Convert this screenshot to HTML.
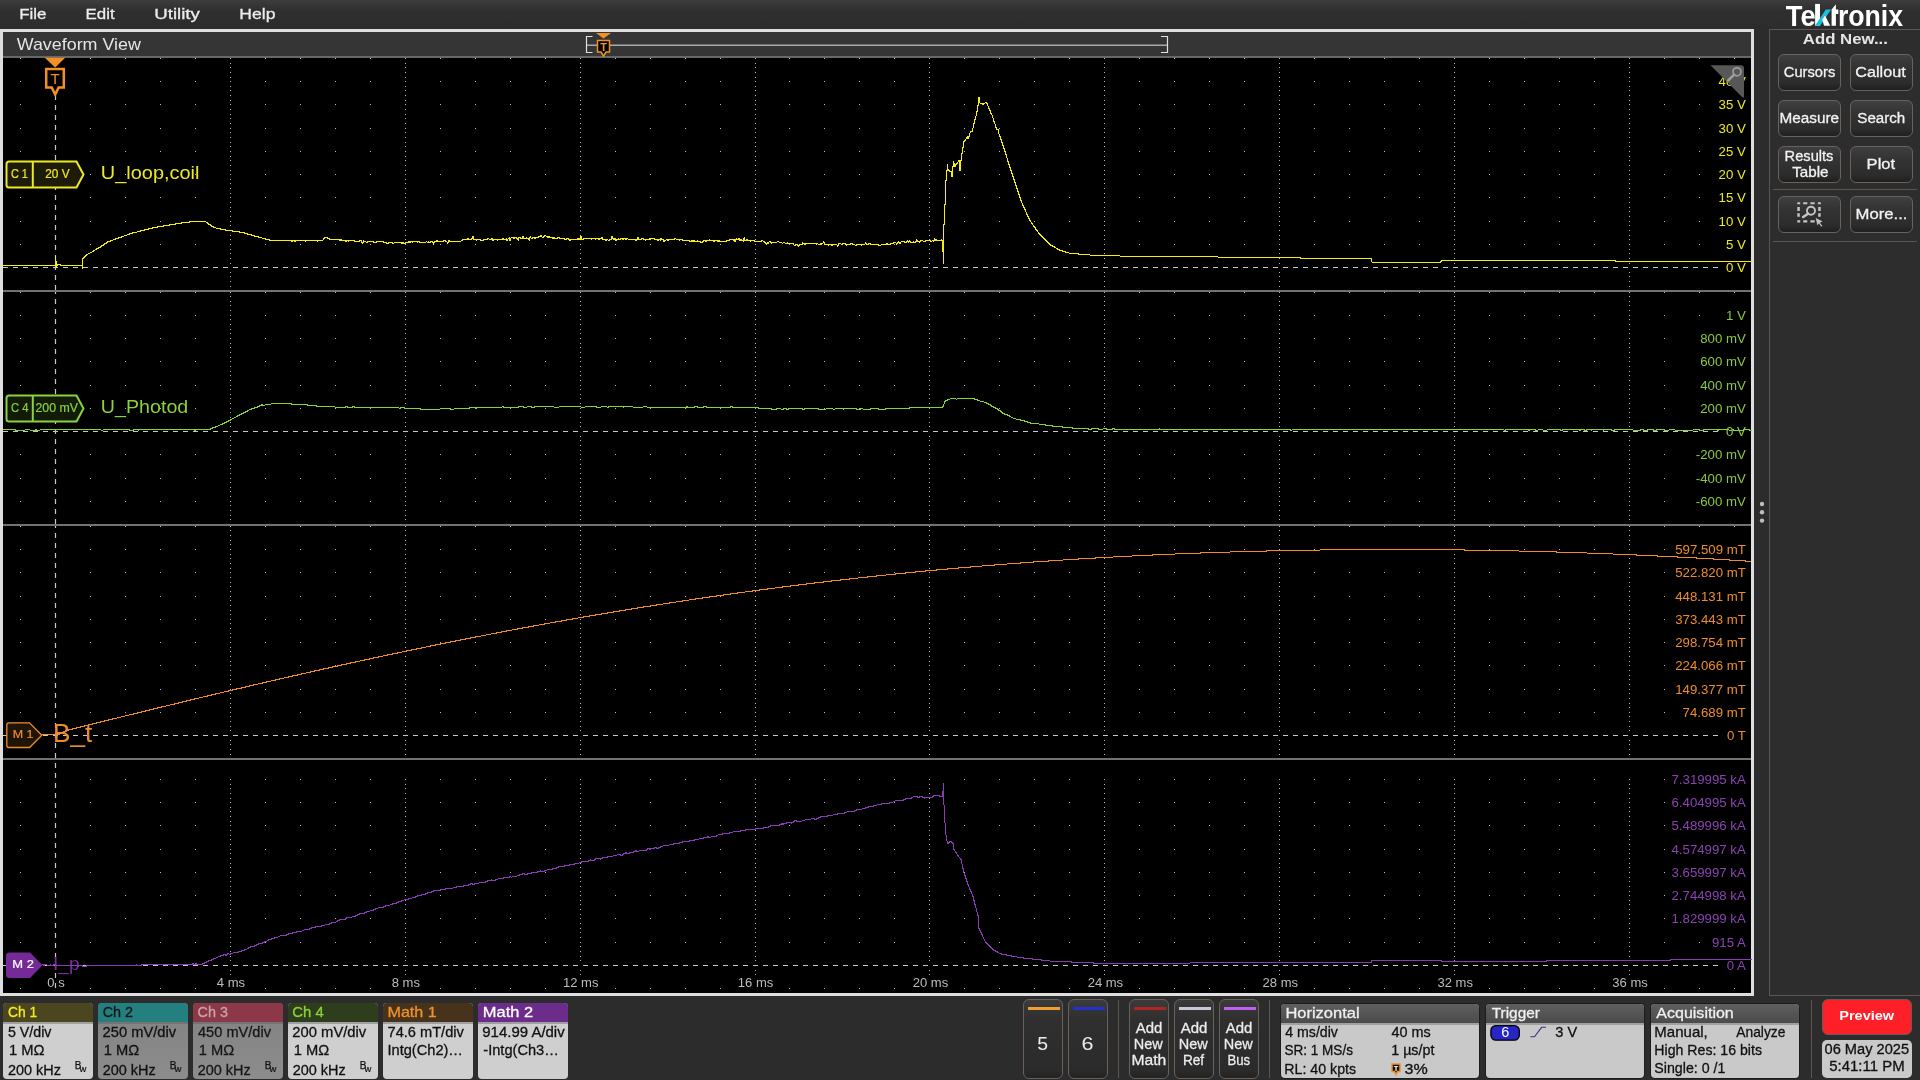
<!DOCTYPE html>
<html><head><meta charset="utf-8">
<style>
*{margin:0;padding:0;box-sizing:border-box}
html,body{width:1920px;height:1080px;overflow:hidden;background:#2c2c2c;font-family:"Liberation Sans", sans-serif;}
.a{position:absolute}
svg{position:absolute;left:0;top:0;will-change:transform}
svg text{font-family:"Liberation Sans", sans-serif}
.menu{position:absolute;left:0;top:0;width:1920px;height:29px;background:linear-gradient(#3d3d3d 0%,#2f2f2f 35%,#2c2c2c 100%)}
.frame{position:absolute;left:0;top:29px;width:1754px;height:967px;border:3px solid #dedede;background:#000}
.title{position:absolute;left:3px;top:32px;width:1748px;height:24px;background:#353535}
.rp{position:absolute;left:1769px;top:29px;width:151px;height:967px;border:1px solid #5a5755;border-right:none;background:#2d2d2d}
.btn{position:absolute;width:63px;height:37px;border:1px solid #6b615b;border-radius:6px;background:linear-gradient(#3f3f41 0%,#333334 35%,#2c2c2c 80%,#1f1f1f 100%)}
.sep{position:absolute;height:1px;background:#5d554f}
.badge{position:absolute;top:1003px;width:90px;height:76px;border-radius:4px;overflow:hidden;background:#cfcfcf}
.bh{height:21px;border-bottom:2px solid #a0a0a0}
.sbtn{position:absolute;top:999px;width:40px;height:80px;border:1px solid #6b615b;border-radius:6px;background:linear-gradient(#3b3b3c 0%,#2f2f2f 25%,#2b2b2b 90%,#222 100%)}
.strip{position:absolute;left:3.5px;top:7px;width:32px;height:2.5px}
.box{position:absolute;top:1004px;height:74px;border-radius:4px;overflow:hidden;background:#c9c9c9;box-shadow:0 0 0 1px #1c1c1c}
.boxh{height:21px;background:linear-gradient(#5f5f5f,#4b4b4b);border-bottom:2px solid #a0a0a0}
</style></head><body>
<div class="menu"></div>
<div class="frame"></div>
<div class="title"></div>
<svg width="1920" height="1080">
<rect x="3" y="56" width="1748" height="2" fill="#686868"/>
<path d="M592.5 36.5 H586.5 V52.5 H592.5" fill="none" stroke="#e0e0e0" stroke-width="1.2"/>
<path d="M1161 36.5 H1167.5 V52.5 H1161" fill="none" stroke="#e0e0e0" stroke-width="1.2"/>
<rect x="587" y="44.5" width="580" height="1.5" fill="#a8a8a8"/>
<path d="M596 33 L611 33 L603.5 38.5 Z" fill="#f0902a"/>
<path d="M597.5 40.5 L609.5 40.5 L609.5 52 L606 52 L603.5 56 L601 52 L597.5 52 Z" fill="#000" stroke="#f0902a" stroke-width="1.5"/>
<text x="603.5" y="50.5" font-size="11" font-weight="bold" fill="#f0902a" text-anchor="middle">T</text>
<path d="M20 58h1v1h-1zM90 58h1v1h-1zM125 58h1v1h-1zM160 58h1v1h-1zM195 58h1v1h-1zM230 58h1v1h-1zM265 58h1v1h-1zM300 58h1v1h-1zM335 58h1v1h-1zM370 58h1v1h-1zM405 58h1v1h-1zM440 58h1v1h-1zM475 58h1v1h-1zM510 58h1v1h-1zM545 58h1v1h-1zM580 58h1v1h-1zM615 58h1v1h-1zM650 58h1v1h-1zM685 58h1v1h-1zM720 58h1v1h-1zM755 58h1v1h-1zM789 58h1v1h-1zM824 58h1v1h-1zM859 58h1v1h-1zM894 58h1v1h-1zM929 58h1v1h-1zM964 58h1v1h-1zM999 58h1v1h-1zM1034 58h1v1h-1zM1069 58h1v1h-1zM1104 58h1v1h-1zM1139 58h1v1h-1zM1174 58h1v1h-1zM1209 58h1v1h-1zM1244 58h1v1h-1zM1279 58h1v1h-1zM1314 58h1v1h-1zM1349 58h1v1h-1zM1384 58h1v1h-1zM1419 58h1v1h-1zM1454 58h1v1h-1zM1489 58h1v1h-1zM1524 58h1v1h-1zM1559 58h1v1h-1zM1594 58h1v1h-1zM1629 58h1v1h-1zM1664 58h1v1h-1zM1699 58h1v1h-1zM1734 58h1v1h-1zM20 81h1v1h-1zM90 81h1v1h-1zM125 81h1v1h-1zM160 81h1v1h-1zM195 81h1v1h-1zM230 81h1v1h-1zM265 81h1v1h-1zM300 81h1v1h-1zM335 81h1v1h-1zM370 81h1v1h-1zM405 81h1v1h-1zM440 81h1v1h-1zM475 81h1v1h-1zM510 81h1v1h-1zM545 81h1v1h-1zM580 81h1v1h-1zM615 81h1v1h-1zM650 81h1v1h-1zM685 81h1v1h-1zM720 81h1v1h-1zM755 81h1v1h-1zM789 81h1v1h-1zM824 81h1v1h-1zM859 81h1v1h-1zM894 81h1v1h-1zM929 81h1v1h-1zM964 81h1v1h-1zM999 81h1v1h-1zM1034 81h1v1h-1zM1069 81h1v1h-1zM1104 81h1v1h-1zM1139 81h1v1h-1zM1174 81h1v1h-1zM1209 81h1v1h-1zM1244 81h1v1h-1zM1279 81h1v1h-1zM1314 81h1v1h-1zM1349 81h1v1h-1zM1384 81h1v1h-1zM1419 81h1v1h-1zM1454 81h1v1h-1zM1489 81h1v1h-1zM1524 81h1v1h-1zM1559 81h1v1h-1zM1594 81h1v1h-1zM1629 81h1v1h-1zM1664 81h1v1h-1zM1699 81h1v1h-1zM1734 81h1v1h-1zM20 104h1v1h-1zM90 104h1v1h-1zM125 104h1v1h-1zM160 104h1v1h-1zM195 104h1v1h-1zM230 104h1v1h-1zM265 104h1v1h-1zM300 104h1v1h-1zM335 104h1v1h-1zM370 104h1v1h-1zM405 104h1v1h-1zM440 104h1v1h-1zM475 104h1v1h-1zM510 104h1v1h-1zM545 104h1v1h-1zM580 104h1v1h-1zM615 104h1v1h-1zM650 104h1v1h-1zM685 104h1v1h-1zM720 104h1v1h-1zM755 104h1v1h-1zM789 104h1v1h-1zM824 104h1v1h-1zM859 104h1v1h-1zM894 104h1v1h-1zM929 104h1v1h-1zM964 104h1v1h-1zM999 104h1v1h-1zM1034 104h1v1h-1zM1069 104h1v1h-1zM1104 104h1v1h-1zM1139 104h1v1h-1zM1174 104h1v1h-1zM1209 104h1v1h-1zM1244 104h1v1h-1zM1279 104h1v1h-1zM1314 104h1v1h-1zM1349 104h1v1h-1zM1384 104h1v1h-1zM1419 104h1v1h-1zM1454 104h1v1h-1zM1489 104h1v1h-1zM1524 104h1v1h-1zM1559 104h1v1h-1zM1594 104h1v1h-1zM1629 104h1v1h-1zM1664 104h1v1h-1zM1699 104h1v1h-1zM1734 104h1v1h-1zM20 128h1v1h-1zM90 128h1v1h-1zM125 128h1v1h-1zM160 128h1v1h-1zM195 128h1v1h-1zM230 128h1v1h-1zM265 128h1v1h-1zM300 128h1v1h-1zM335 128h1v1h-1zM370 128h1v1h-1zM405 128h1v1h-1zM440 128h1v1h-1zM475 128h1v1h-1zM510 128h1v1h-1zM545 128h1v1h-1zM580 128h1v1h-1zM615 128h1v1h-1zM650 128h1v1h-1zM685 128h1v1h-1zM720 128h1v1h-1zM755 128h1v1h-1zM789 128h1v1h-1zM824 128h1v1h-1zM859 128h1v1h-1zM894 128h1v1h-1zM929 128h1v1h-1zM964 128h1v1h-1zM999 128h1v1h-1zM1034 128h1v1h-1zM1069 128h1v1h-1zM1104 128h1v1h-1zM1139 128h1v1h-1zM1174 128h1v1h-1zM1209 128h1v1h-1zM1244 128h1v1h-1zM1279 128h1v1h-1zM1314 128h1v1h-1zM1349 128h1v1h-1zM1384 128h1v1h-1zM1419 128h1v1h-1zM1454 128h1v1h-1zM1489 128h1v1h-1zM1524 128h1v1h-1zM1559 128h1v1h-1zM1594 128h1v1h-1zM1629 128h1v1h-1zM1664 128h1v1h-1zM1699 128h1v1h-1zM1734 128h1v1h-1zM20 151h1v1h-1zM90 151h1v1h-1zM125 151h1v1h-1zM160 151h1v1h-1zM195 151h1v1h-1zM230 151h1v1h-1zM265 151h1v1h-1zM300 151h1v1h-1zM335 151h1v1h-1zM370 151h1v1h-1zM405 151h1v1h-1zM440 151h1v1h-1zM475 151h1v1h-1zM510 151h1v1h-1zM545 151h1v1h-1zM580 151h1v1h-1zM615 151h1v1h-1zM650 151h1v1h-1zM685 151h1v1h-1zM720 151h1v1h-1zM755 151h1v1h-1zM789 151h1v1h-1zM824 151h1v1h-1zM859 151h1v1h-1zM894 151h1v1h-1zM929 151h1v1h-1zM964 151h1v1h-1zM999 151h1v1h-1zM1034 151h1v1h-1zM1069 151h1v1h-1zM1104 151h1v1h-1zM1139 151h1v1h-1zM1174 151h1v1h-1zM1209 151h1v1h-1zM1244 151h1v1h-1zM1279 151h1v1h-1zM1314 151h1v1h-1zM1349 151h1v1h-1zM1384 151h1v1h-1zM1419 151h1v1h-1zM1454 151h1v1h-1zM1489 151h1v1h-1zM1524 151h1v1h-1zM1559 151h1v1h-1zM1594 151h1v1h-1zM1629 151h1v1h-1zM1664 151h1v1h-1zM1699 151h1v1h-1zM1734 151h1v1h-1zM20 174h1v1h-1zM90 174h1v1h-1zM125 174h1v1h-1zM160 174h1v1h-1zM195 174h1v1h-1zM230 174h1v1h-1zM265 174h1v1h-1zM300 174h1v1h-1zM335 174h1v1h-1zM370 174h1v1h-1zM405 174h1v1h-1zM440 174h1v1h-1zM475 174h1v1h-1zM510 174h1v1h-1zM545 174h1v1h-1zM580 174h1v1h-1zM615 174h1v1h-1zM650 174h1v1h-1zM685 174h1v1h-1zM720 174h1v1h-1zM755 174h1v1h-1zM789 174h1v1h-1zM824 174h1v1h-1zM859 174h1v1h-1zM894 174h1v1h-1zM929 174h1v1h-1zM964 174h1v1h-1zM999 174h1v1h-1zM1034 174h1v1h-1zM1069 174h1v1h-1zM1104 174h1v1h-1zM1139 174h1v1h-1zM1174 174h1v1h-1zM1209 174h1v1h-1zM1244 174h1v1h-1zM1279 174h1v1h-1zM1314 174h1v1h-1zM1349 174h1v1h-1zM1384 174h1v1h-1zM1419 174h1v1h-1zM1454 174h1v1h-1zM1489 174h1v1h-1zM1524 174h1v1h-1zM1559 174h1v1h-1zM1594 174h1v1h-1zM1629 174h1v1h-1zM1664 174h1v1h-1zM1699 174h1v1h-1zM1734 174h1v1h-1zM20 197h1v1h-1zM90 197h1v1h-1zM125 197h1v1h-1zM160 197h1v1h-1zM195 197h1v1h-1zM230 197h1v1h-1zM265 197h1v1h-1zM300 197h1v1h-1zM335 197h1v1h-1zM370 197h1v1h-1zM405 197h1v1h-1zM440 197h1v1h-1zM475 197h1v1h-1zM510 197h1v1h-1zM545 197h1v1h-1zM580 197h1v1h-1zM615 197h1v1h-1zM650 197h1v1h-1zM685 197h1v1h-1zM720 197h1v1h-1zM755 197h1v1h-1zM789 197h1v1h-1zM824 197h1v1h-1zM859 197h1v1h-1zM894 197h1v1h-1zM929 197h1v1h-1zM964 197h1v1h-1zM999 197h1v1h-1zM1034 197h1v1h-1zM1069 197h1v1h-1zM1104 197h1v1h-1zM1139 197h1v1h-1zM1174 197h1v1h-1zM1209 197h1v1h-1zM1244 197h1v1h-1zM1279 197h1v1h-1zM1314 197h1v1h-1zM1349 197h1v1h-1zM1384 197h1v1h-1zM1419 197h1v1h-1zM1454 197h1v1h-1zM1489 197h1v1h-1zM1524 197h1v1h-1zM1559 197h1v1h-1zM1594 197h1v1h-1zM1629 197h1v1h-1zM1664 197h1v1h-1zM1699 197h1v1h-1zM1734 197h1v1h-1zM20 221h1v1h-1zM90 221h1v1h-1zM125 221h1v1h-1zM160 221h1v1h-1zM195 221h1v1h-1zM230 221h1v1h-1zM265 221h1v1h-1zM300 221h1v1h-1zM335 221h1v1h-1zM370 221h1v1h-1zM405 221h1v1h-1zM440 221h1v1h-1zM475 221h1v1h-1zM510 221h1v1h-1zM545 221h1v1h-1zM580 221h1v1h-1zM615 221h1v1h-1zM650 221h1v1h-1zM685 221h1v1h-1zM720 221h1v1h-1zM755 221h1v1h-1zM789 221h1v1h-1zM824 221h1v1h-1zM859 221h1v1h-1zM894 221h1v1h-1zM929 221h1v1h-1zM964 221h1v1h-1zM999 221h1v1h-1zM1034 221h1v1h-1zM1069 221h1v1h-1zM1104 221h1v1h-1zM1139 221h1v1h-1zM1174 221h1v1h-1zM1209 221h1v1h-1zM1244 221h1v1h-1zM1279 221h1v1h-1zM1314 221h1v1h-1zM1349 221h1v1h-1zM1384 221h1v1h-1zM1419 221h1v1h-1zM1454 221h1v1h-1zM1489 221h1v1h-1zM1524 221h1v1h-1zM1559 221h1v1h-1zM1594 221h1v1h-1zM1629 221h1v1h-1zM1664 221h1v1h-1zM1699 221h1v1h-1zM1734 221h1v1h-1zM20 244h1v1h-1zM90 244h1v1h-1zM125 244h1v1h-1zM160 244h1v1h-1zM195 244h1v1h-1zM230 244h1v1h-1zM265 244h1v1h-1zM300 244h1v1h-1zM335 244h1v1h-1zM370 244h1v1h-1zM405 244h1v1h-1zM440 244h1v1h-1zM475 244h1v1h-1zM510 244h1v1h-1zM545 244h1v1h-1zM580 244h1v1h-1zM615 244h1v1h-1zM650 244h1v1h-1zM685 244h1v1h-1zM720 244h1v1h-1zM755 244h1v1h-1zM789 244h1v1h-1zM824 244h1v1h-1zM859 244h1v1h-1zM894 244h1v1h-1zM929 244h1v1h-1zM964 244h1v1h-1zM999 244h1v1h-1zM1034 244h1v1h-1zM1069 244h1v1h-1zM1104 244h1v1h-1zM1139 244h1v1h-1zM1174 244h1v1h-1zM1209 244h1v1h-1zM1244 244h1v1h-1zM1279 244h1v1h-1zM1314 244h1v1h-1zM1349 244h1v1h-1zM1384 244h1v1h-1zM1419 244h1v1h-1zM1454 244h1v1h-1zM1489 244h1v1h-1zM1524 244h1v1h-1zM1559 244h1v1h-1zM1594 244h1v1h-1zM1629 244h1v1h-1zM1664 244h1v1h-1zM1699 244h1v1h-1zM1734 244h1v1h-1zM230 63h1v1h-1zM405 63h1v1h-1zM580 63h1v1h-1zM755 63h1v1h-1zM929 63h1v1h-1zM1104 63h1v1h-1zM1279 63h1v1h-1zM1454 63h1v1h-1zM1629 63h1v1h-1zM230 67h1v1h-1zM405 67h1v1h-1zM580 67h1v1h-1zM755 67h1v1h-1zM929 67h1v1h-1zM1104 67h1v1h-1zM1279 67h1v1h-1zM1454 67h1v1h-1zM1629 67h1v1h-1zM230 72h1v1h-1zM405 72h1v1h-1zM580 72h1v1h-1zM755 72h1v1h-1zM929 72h1v1h-1zM1104 72h1v1h-1zM1279 72h1v1h-1zM1454 72h1v1h-1zM1629 72h1v1h-1zM230 77h1v1h-1zM405 77h1v1h-1zM580 77h1v1h-1zM755 77h1v1h-1zM929 77h1v1h-1zM1104 77h1v1h-1zM1279 77h1v1h-1zM1454 77h1v1h-1zM1629 77h1v1h-1zM230 86h1v1h-1zM405 86h1v1h-1zM580 86h1v1h-1zM755 86h1v1h-1zM929 86h1v1h-1zM1104 86h1v1h-1zM1279 86h1v1h-1zM1454 86h1v1h-1zM1629 86h1v1h-1zM230 90h1v1h-1zM405 90h1v1h-1zM580 90h1v1h-1zM755 90h1v1h-1zM929 90h1v1h-1zM1104 90h1v1h-1zM1279 90h1v1h-1zM1454 90h1v1h-1zM1629 90h1v1h-1zM230 95h1v1h-1zM405 95h1v1h-1zM580 95h1v1h-1zM755 95h1v1h-1zM929 95h1v1h-1zM1104 95h1v1h-1zM1279 95h1v1h-1zM1454 95h1v1h-1zM1629 95h1v1h-1zM230 100h1v1h-1zM405 100h1v1h-1zM580 100h1v1h-1zM755 100h1v1h-1zM929 100h1v1h-1zM1104 100h1v1h-1zM1279 100h1v1h-1zM1454 100h1v1h-1zM1629 100h1v1h-1zM230 109h1v1h-1zM405 109h1v1h-1zM580 109h1v1h-1zM755 109h1v1h-1zM929 109h1v1h-1zM1104 109h1v1h-1zM1279 109h1v1h-1zM1454 109h1v1h-1zM1629 109h1v1h-1zM230 114h1v1h-1zM405 114h1v1h-1zM580 114h1v1h-1zM755 114h1v1h-1zM929 114h1v1h-1zM1104 114h1v1h-1zM1279 114h1v1h-1zM1454 114h1v1h-1zM1629 114h1v1h-1zM230 118h1v1h-1zM405 118h1v1h-1zM580 118h1v1h-1zM755 118h1v1h-1zM929 118h1v1h-1zM1104 118h1v1h-1zM1279 118h1v1h-1zM1454 118h1v1h-1zM1629 118h1v1h-1zM230 123h1v1h-1zM405 123h1v1h-1zM580 123h1v1h-1zM755 123h1v1h-1zM929 123h1v1h-1zM1104 123h1v1h-1zM1279 123h1v1h-1zM1454 123h1v1h-1zM1629 123h1v1h-1zM230 132h1v1h-1zM405 132h1v1h-1zM580 132h1v1h-1zM755 132h1v1h-1zM929 132h1v1h-1zM1104 132h1v1h-1zM1279 132h1v1h-1zM1454 132h1v1h-1zM1629 132h1v1h-1zM230 137h1v1h-1zM405 137h1v1h-1zM580 137h1v1h-1zM755 137h1v1h-1zM929 137h1v1h-1zM1104 137h1v1h-1zM1279 137h1v1h-1zM1454 137h1v1h-1zM1629 137h1v1h-1zM230 142h1v1h-1zM405 142h1v1h-1zM580 142h1v1h-1zM755 142h1v1h-1zM929 142h1v1h-1zM1104 142h1v1h-1zM1279 142h1v1h-1zM1454 142h1v1h-1zM1629 142h1v1h-1zM230 146h1v1h-1zM405 146h1v1h-1zM580 146h1v1h-1zM755 146h1v1h-1zM929 146h1v1h-1zM1104 146h1v1h-1zM1279 146h1v1h-1zM1454 146h1v1h-1zM1629 146h1v1h-1zM230 156h1v1h-1zM405 156h1v1h-1zM580 156h1v1h-1zM755 156h1v1h-1zM929 156h1v1h-1zM1104 156h1v1h-1zM1279 156h1v1h-1zM1454 156h1v1h-1zM1629 156h1v1h-1zM230 160h1v1h-1zM405 160h1v1h-1zM580 160h1v1h-1zM755 160h1v1h-1zM929 160h1v1h-1zM1104 160h1v1h-1zM1279 160h1v1h-1zM1454 160h1v1h-1zM1629 160h1v1h-1zM230 165h1v1h-1zM405 165h1v1h-1zM580 165h1v1h-1zM755 165h1v1h-1zM929 165h1v1h-1zM1104 165h1v1h-1zM1279 165h1v1h-1zM1454 165h1v1h-1zM1629 165h1v1h-1zM230 170h1v1h-1zM405 170h1v1h-1zM580 170h1v1h-1zM755 170h1v1h-1zM929 170h1v1h-1zM1104 170h1v1h-1zM1279 170h1v1h-1zM1454 170h1v1h-1zM1629 170h1v1h-1zM230 179h1v1h-1zM405 179h1v1h-1zM580 179h1v1h-1zM755 179h1v1h-1zM929 179h1v1h-1zM1104 179h1v1h-1zM1279 179h1v1h-1zM1454 179h1v1h-1zM1629 179h1v1h-1zM230 183h1v1h-1zM405 183h1v1h-1zM580 183h1v1h-1zM755 183h1v1h-1zM929 183h1v1h-1zM1104 183h1v1h-1zM1279 183h1v1h-1zM1454 183h1v1h-1zM1629 183h1v1h-1zM230 188h1v1h-1zM405 188h1v1h-1zM580 188h1v1h-1zM755 188h1v1h-1zM929 188h1v1h-1zM1104 188h1v1h-1zM1279 188h1v1h-1zM1454 188h1v1h-1zM1629 188h1v1h-1zM230 193h1v1h-1zM405 193h1v1h-1zM580 193h1v1h-1zM755 193h1v1h-1zM929 193h1v1h-1zM1104 193h1v1h-1zM1279 193h1v1h-1zM1454 193h1v1h-1zM1629 193h1v1h-1zM230 202h1v1h-1zM405 202h1v1h-1zM580 202h1v1h-1zM755 202h1v1h-1zM929 202h1v1h-1zM1104 202h1v1h-1zM1279 202h1v1h-1zM1454 202h1v1h-1zM1629 202h1v1h-1zM230 207h1v1h-1zM405 207h1v1h-1zM580 207h1v1h-1zM755 207h1v1h-1zM929 207h1v1h-1zM1104 207h1v1h-1zM1279 207h1v1h-1zM1454 207h1v1h-1zM1629 207h1v1h-1zM230 211h1v1h-1zM405 211h1v1h-1zM580 211h1v1h-1zM755 211h1v1h-1zM929 211h1v1h-1zM1104 211h1v1h-1zM1279 211h1v1h-1zM1454 211h1v1h-1zM1629 211h1v1h-1zM230 216h1v1h-1zM405 216h1v1h-1zM580 216h1v1h-1zM755 216h1v1h-1zM929 216h1v1h-1zM1104 216h1v1h-1zM1279 216h1v1h-1zM1454 216h1v1h-1zM1629 216h1v1h-1zM230 225h1v1h-1zM405 225h1v1h-1zM580 225h1v1h-1zM755 225h1v1h-1zM929 225h1v1h-1zM1104 225h1v1h-1zM1279 225h1v1h-1zM1454 225h1v1h-1zM1629 225h1v1h-1zM230 230h1v1h-1zM405 230h1v1h-1zM580 230h1v1h-1zM755 230h1v1h-1zM929 230h1v1h-1zM1104 230h1v1h-1zM1279 230h1v1h-1zM1454 230h1v1h-1zM1629 230h1v1h-1zM230 235h1v1h-1zM405 235h1v1h-1zM580 235h1v1h-1zM755 235h1v1h-1zM929 235h1v1h-1zM1104 235h1v1h-1zM1279 235h1v1h-1zM1454 235h1v1h-1zM1629 235h1v1h-1zM230 239h1v1h-1zM405 239h1v1h-1zM580 239h1v1h-1zM755 239h1v1h-1zM929 239h1v1h-1zM1104 239h1v1h-1zM1279 239h1v1h-1zM1454 239h1v1h-1zM1629 239h1v1h-1zM230 249h1v1h-1zM405 249h1v1h-1zM580 249h1v1h-1zM755 249h1v1h-1zM929 249h1v1h-1zM1104 249h1v1h-1zM1279 249h1v1h-1zM1454 249h1v1h-1zM1629 249h1v1h-1zM230 253h1v1h-1zM405 253h1v1h-1zM580 253h1v1h-1zM755 253h1v1h-1zM929 253h1v1h-1zM1104 253h1v1h-1zM1279 253h1v1h-1zM1454 253h1v1h-1zM1629 253h1v1h-1zM230 258h1v1h-1zM405 258h1v1h-1zM580 258h1v1h-1zM755 258h1v1h-1zM929 258h1v1h-1zM1104 258h1v1h-1zM1279 258h1v1h-1zM1454 258h1v1h-1zM1629 258h1v1h-1zM230 263h1v1h-1zM405 263h1v1h-1zM580 263h1v1h-1zM755 263h1v1h-1zM929 263h1v1h-1zM1104 263h1v1h-1zM1279 263h1v1h-1zM1454 263h1v1h-1zM1629 263h1v1h-1zM230 272h1v1h-1zM405 272h1v1h-1zM580 272h1v1h-1zM755 272h1v1h-1zM929 272h1v1h-1zM1104 272h1v1h-1zM1279 272h1v1h-1zM1454 272h1v1h-1zM1629 272h1v1h-1zM230 276h1v1h-1zM405 276h1v1h-1zM580 276h1v1h-1zM755 276h1v1h-1zM929 276h1v1h-1zM1104 276h1v1h-1zM1279 276h1v1h-1zM1454 276h1v1h-1zM1629 276h1v1h-1zM230 281h1v1h-1zM405 281h1v1h-1zM580 281h1v1h-1zM755 281h1v1h-1zM929 281h1v1h-1zM1104 281h1v1h-1zM1279 281h1v1h-1zM1454 281h1v1h-1zM1629 281h1v1h-1zM230 286h1v1h-1zM405 286h1v1h-1zM580 286h1v1h-1zM755 286h1v1h-1zM929 286h1v1h-1zM1104 286h1v1h-1zM1279 286h1v1h-1zM1454 286h1v1h-1zM1629 286h1v1h-1zM20 292h1v1h-1zM90 292h1v1h-1zM125 292h1v1h-1zM160 292h1v1h-1zM195 292h1v1h-1zM230 292h1v1h-1zM265 292h1v1h-1zM300 292h1v1h-1zM335 292h1v1h-1zM370 292h1v1h-1zM405 292h1v1h-1zM440 292h1v1h-1zM475 292h1v1h-1zM510 292h1v1h-1zM545 292h1v1h-1zM580 292h1v1h-1zM615 292h1v1h-1zM650 292h1v1h-1zM685 292h1v1h-1zM720 292h1v1h-1zM755 292h1v1h-1zM789 292h1v1h-1zM824 292h1v1h-1zM859 292h1v1h-1zM894 292h1v1h-1zM929 292h1v1h-1zM964 292h1v1h-1zM999 292h1v1h-1zM1034 292h1v1h-1zM1069 292h1v1h-1zM1104 292h1v1h-1zM1139 292h1v1h-1zM1174 292h1v1h-1zM1209 292h1v1h-1zM1244 292h1v1h-1zM1279 292h1v1h-1zM1314 292h1v1h-1zM1349 292h1v1h-1zM1384 292h1v1h-1zM1419 292h1v1h-1zM1454 292h1v1h-1zM1489 292h1v1h-1zM1524 292h1v1h-1zM1559 292h1v1h-1zM1594 292h1v1h-1zM1629 292h1v1h-1zM1664 292h1v1h-1zM1699 292h1v1h-1zM1734 292h1v1h-1zM20 315h1v1h-1zM90 315h1v1h-1zM125 315h1v1h-1zM160 315h1v1h-1zM195 315h1v1h-1zM230 315h1v1h-1zM265 315h1v1h-1zM300 315h1v1h-1zM335 315h1v1h-1zM370 315h1v1h-1zM405 315h1v1h-1zM440 315h1v1h-1zM475 315h1v1h-1zM510 315h1v1h-1zM545 315h1v1h-1zM580 315h1v1h-1zM615 315h1v1h-1zM650 315h1v1h-1zM685 315h1v1h-1zM720 315h1v1h-1zM755 315h1v1h-1zM789 315h1v1h-1zM824 315h1v1h-1zM859 315h1v1h-1zM894 315h1v1h-1zM929 315h1v1h-1zM964 315h1v1h-1zM999 315h1v1h-1zM1034 315h1v1h-1zM1069 315h1v1h-1zM1104 315h1v1h-1zM1139 315h1v1h-1zM1174 315h1v1h-1zM1209 315h1v1h-1zM1244 315h1v1h-1zM1279 315h1v1h-1zM1314 315h1v1h-1zM1349 315h1v1h-1zM1384 315h1v1h-1zM1419 315h1v1h-1zM1454 315h1v1h-1zM1489 315h1v1h-1zM1524 315h1v1h-1zM1559 315h1v1h-1zM1594 315h1v1h-1zM1629 315h1v1h-1zM1664 315h1v1h-1zM1699 315h1v1h-1zM1734 315h1v1h-1zM20 338h1v1h-1zM90 338h1v1h-1zM125 338h1v1h-1zM160 338h1v1h-1zM195 338h1v1h-1zM230 338h1v1h-1zM265 338h1v1h-1zM300 338h1v1h-1zM335 338h1v1h-1zM370 338h1v1h-1zM405 338h1v1h-1zM440 338h1v1h-1zM475 338h1v1h-1zM510 338h1v1h-1zM545 338h1v1h-1zM580 338h1v1h-1zM615 338h1v1h-1zM650 338h1v1h-1zM685 338h1v1h-1zM720 338h1v1h-1zM755 338h1v1h-1zM789 338h1v1h-1zM824 338h1v1h-1zM859 338h1v1h-1zM894 338h1v1h-1zM929 338h1v1h-1zM964 338h1v1h-1zM999 338h1v1h-1zM1034 338h1v1h-1zM1069 338h1v1h-1zM1104 338h1v1h-1zM1139 338h1v1h-1zM1174 338h1v1h-1zM1209 338h1v1h-1zM1244 338h1v1h-1zM1279 338h1v1h-1zM1314 338h1v1h-1zM1349 338h1v1h-1zM1384 338h1v1h-1zM1419 338h1v1h-1zM1454 338h1v1h-1zM1489 338h1v1h-1zM1524 338h1v1h-1zM1559 338h1v1h-1zM1594 338h1v1h-1zM1629 338h1v1h-1zM1664 338h1v1h-1zM1699 338h1v1h-1zM1734 338h1v1h-1zM20 361h1v1h-1zM90 361h1v1h-1zM125 361h1v1h-1zM160 361h1v1h-1zM195 361h1v1h-1zM230 361h1v1h-1zM265 361h1v1h-1zM300 361h1v1h-1zM335 361h1v1h-1zM370 361h1v1h-1zM405 361h1v1h-1zM440 361h1v1h-1zM475 361h1v1h-1zM510 361h1v1h-1zM545 361h1v1h-1zM580 361h1v1h-1zM615 361h1v1h-1zM650 361h1v1h-1zM685 361h1v1h-1zM720 361h1v1h-1zM755 361h1v1h-1zM789 361h1v1h-1zM824 361h1v1h-1zM859 361h1v1h-1zM894 361h1v1h-1zM929 361h1v1h-1zM964 361h1v1h-1zM999 361h1v1h-1zM1034 361h1v1h-1zM1069 361h1v1h-1zM1104 361h1v1h-1zM1139 361h1v1h-1zM1174 361h1v1h-1zM1209 361h1v1h-1zM1244 361h1v1h-1zM1279 361h1v1h-1zM1314 361h1v1h-1zM1349 361h1v1h-1zM1384 361h1v1h-1zM1419 361h1v1h-1zM1454 361h1v1h-1zM1489 361h1v1h-1zM1524 361h1v1h-1zM1559 361h1v1h-1zM1594 361h1v1h-1zM1629 361h1v1h-1zM1664 361h1v1h-1zM1699 361h1v1h-1zM1734 361h1v1h-1zM20 385h1v1h-1zM90 385h1v1h-1zM125 385h1v1h-1zM160 385h1v1h-1zM195 385h1v1h-1zM230 385h1v1h-1zM265 385h1v1h-1zM300 385h1v1h-1zM335 385h1v1h-1zM370 385h1v1h-1zM405 385h1v1h-1zM440 385h1v1h-1zM475 385h1v1h-1zM510 385h1v1h-1zM545 385h1v1h-1zM580 385h1v1h-1zM615 385h1v1h-1zM650 385h1v1h-1zM685 385h1v1h-1zM720 385h1v1h-1zM755 385h1v1h-1zM789 385h1v1h-1zM824 385h1v1h-1zM859 385h1v1h-1zM894 385h1v1h-1zM929 385h1v1h-1zM964 385h1v1h-1zM999 385h1v1h-1zM1034 385h1v1h-1zM1069 385h1v1h-1zM1104 385h1v1h-1zM1139 385h1v1h-1zM1174 385h1v1h-1zM1209 385h1v1h-1zM1244 385h1v1h-1zM1279 385h1v1h-1zM1314 385h1v1h-1zM1349 385h1v1h-1zM1384 385h1v1h-1zM1419 385h1v1h-1zM1454 385h1v1h-1zM1489 385h1v1h-1zM1524 385h1v1h-1zM1559 385h1v1h-1zM1594 385h1v1h-1zM1629 385h1v1h-1zM1664 385h1v1h-1zM1699 385h1v1h-1zM1734 385h1v1h-1zM20 408h1v1h-1zM90 408h1v1h-1zM125 408h1v1h-1zM160 408h1v1h-1zM195 408h1v1h-1zM230 408h1v1h-1zM265 408h1v1h-1zM300 408h1v1h-1zM335 408h1v1h-1zM370 408h1v1h-1zM405 408h1v1h-1zM440 408h1v1h-1zM475 408h1v1h-1zM510 408h1v1h-1zM545 408h1v1h-1zM580 408h1v1h-1zM615 408h1v1h-1zM650 408h1v1h-1zM685 408h1v1h-1zM720 408h1v1h-1zM755 408h1v1h-1zM789 408h1v1h-1zM824 408h1v1h-1zM859 408h1v1h-1zM894 408h1v1h-1zM929 408h1v1h-1zM964 408h1v1h-1zM999 408h1v1h-1zM1034 408h1v1h-1zM1069 408h1v1h-1zM1104 408h1v1h-1zM1139 408h1v1h-1zM1174 408h1v1h-1zM1209 408h1v1h-1zM1244 408h1v1h-1zM1279 408h1v1h-1zM1314 408h1v1h-1zM1349 408h1v1h-1zM1384 408h1v1h-1zM1419 408h1v1h-1zM1454 408h1v1h-1zM1489 408h1v1h-1zM1524 408h1v1h-1zM1559 408h1v1h-1zM1594 408h1v1h-1zM1629 408h1v1h-1zM1664 408h1v1h-1zM1699 408h1v1h-1zM1734 408h1v1h-1zM20 454h1v1h-1zM90 454h1v1h-1zM125 454h1v1h-1zM160 454h1v1h-1zM195 454h1v1h-1zM230 454h1v1h-1zM265 454h1v1h-1zM300 454h1v1h-1zM335 454h1v1h-1zM370 454h1v1h-1zM405 454h1v1h-1zM440 454h1v1h-1zM475 454h1v1h-1zM510 454h1v1h-1zM545 454h1v1h-1zM580 454h1v1h-1zM615 454h1v1h-1zM650 454h1v1h-1zM685 454h1v1h-1zM720 454h1v1h-1zM755 454h1v1h-1zM789 454h1v1h-1zM824 454h1v1h-1zM859 454h1v1h-1zM894 454h1v1h-1zM929 454h1v1h-1zM964 454h1v1h-1zM999 454h1v1h-1zM1034 454h1v1h-1zM1069 454h1v1h-1zM1104 454h1v1h-1zM1139 454h1v1h-1zM1174 454h1v1h-1zM1209 454h1v1h-1zM1244 454h1v1h-1zM1279 454h1v1h-1zM1314 454h1v1h-1zM1349 454h1v1h-1zM1384 454h1v1h-1zM1419 454h1v1h-1zM1454 454h1v1h-1zM1489 454h1v1h-1zM1524 454h1v1h-1zM1559 454h1v1h-1zM1594 454h1v1h-1zM1629 454h1v1h-1zM1664 454h1v1h-1zM1699 454h1v1h-1zM1734 454h1v1h-1zM20 478h1v1h-1zM90 478h1v1h-1zM125 478h1v1h-1zM160 478h1v1h-1zM195 478h1v1h-1zM230 478h1v1h-1zM265 478h1v1h-1zM300 478h1v1h-1zM335 478h1v1h-1zM370 478h1v1h-1zM405 478h1v1h-1zM440 478h1v1h-1zM475 478h1v1h-1zM510 478h1v1h-1zM545 478h1v1h-1zM580 478h1v1h-1zM615 478h1v1h-1zM650 478h1v1h-1zM685 478h1v1h-1zM720 478h1v1h-1zM755 478h1v1h-1zM789 478h1v1h-1zM824 478h1v1h-1zM859 478h1v1h-1zM894 478h1v1h-1zM929 478h1v1h-1zM964 478h1v1h-1zM999 478h1v1h-1zM1034 478h1v1h-1zM1069 478h1v1h-1zM1104 478h1v1h-1zM1139 478h1v1h-1zM1174 478h1v1h-1zM1209 478h1v1h-1zM1244 478h1v1h-1zM1279 478h1v1h-1zM1314 478h1v1h-1zM1349 478h1v1h-1zM1384 478h1v1h-1zM1419 478h1v1h-1zM1454 478h1v1h-1zM1489 478h1v1h-1zM1524 478h1v1h-1zM1559 478h1v1h-1zM1594 478h1v1h-1zM1629 478h1v1h-1zM1664 478h1v1h-1zM1699 478h1v1h-1zM1734 478h1v1h-1zM20 501h1v1h-1zM90 501h1v1h-1zM125 501h1v1h-1zM160 501h1v1h-1zM195 501h1v1h-1zM230 501h1v1h-1zM265 501h1v1h-1zM300 501h1v1h-1zM335 501h1v1h-1zM370 501h1v1h-1zM405 501h1v1h-1zM440 501h1v1h-1zM475 501h1v1h-1zM510 501h1v1h-1zM545 501h1v1h-1zM580 501h1v1h-1zM615 501h1v1h-1zM650 501h1v1h-1zM685 501h1v1h-1zM720 501h1v1h-1zM755 501h1v1h-1zM789 501h1v1h-1zM824 501h1v1h-1zM859 501h1v1h-1zM894 501h1v1h-1zM929 501h1v1h-1zM964 501h1v1h-1zM999 501h1v1h-1zM1034 501h1v1h-1zM1069 501h1v1h-1zM1104 501h1v1h-1zM1139 501h1v1h-1zM1174 501h1v1h-1zM1209 501h1v1h-1zM1244 501h1v1h-1zM1279 501h1v1h-1zM1314 501h1v1h-1zM1349 501h1v1h-1zM1384 501h1v1h-1zM1419 501h1v1h-1zM1454 501h1v1h-1zM1489 501h1v1h-1zM1524 501h1v1h-1zM1559 501h1v1h-1zM1594 501h1v1h-1zM1629 501h1v1h-1zM1664 501h1v1h-1zM1699 501h1v1h-1zM1734 501h1v1h-1zM230 296h1v1h-1zM405 296h1v1h-1zM580 296h1v1h-1zM755 296h1v1h-1zM929 296h1v1h-1zM1104 296h1v1h-1zM1279 296h1v1h-1zM1454 296h1v1h-1zM1629 296h1v1h-1zM230 301h1v1h-1zM405 301h1v1h-1zM580 301h1v1h-1zM755 301h1v1h-1zM929 301h1v1h-1zM1104 301h1v1h-1zM1279 301h1v1h-1zM1454 301h1v1h-1zM1629 301h1v1h-1zM230 305h1v1h-1zM405 305h1v1h-1zM580 305h1v1h-1zM755 305h1v1h-1zM929 305h1v1h-1zM1104 305h1v1h-1zM1279 305h1v1h-1zM1454 305h1v1h-1zM1629 305h1v1h-1zM230 310h1v1h-1zM405 310h1v1h-1zM580 310h1v1h-1zM755 310h1v1h-1zM929 310h1v1h-1zM1104 310h1v1h-1zM1279 310h1v1h-1zM1454 310h1v1h-1zM1629 310h1v1h-1zM230 319h1v1h-1zM405 319h1v1h-1zM580 319h1v1h-1zM755 319h1v1h-1zM929 319h1v1h-1zM1104 319h1v1h-1zM1279 319h1v1h-1zM1454 319h1v1h-1zM1629 319h1v1h-1zM230 324h1v1h-1zM405 324h1v1h-1zM580 324h1v1h-1zM755 324h1v1h-1zM929 324h1v1h-1zM1104 324h1v1h-1zM1279 324h1v1h-1zM1454 324h1v1h-1zM1629 324h1v1h-1zM230 329h1v1h-1zM405 329h1v1h-1zM580 329h1v1h-1zM755 329h1v1h-1zM929 329h1v1h-1zM1104 329h1v1h-1zM1279 329h1v1h-1zM1454 329h1v1h-1zM1629 329h1v1h-1zM230 333h1v1h-1zM405 333h1v1h-1zM580 333h1v1h-1zM755 333h1v1h-1zM929 333h1v1h-1zM1104 333h1v1h-1zM1279 333h1v1h-1zM1454 333h1v1h-1zM1629 333h1v1h-1zM230 343h1v1h-1zM405 343h1v1h-1zM580 343h1v1h-1zM755 343h1v1h-1zM929 343h1v1h-1zM1104 343h1v1h-1zM1279 343h1v1h-1zM1454 343h1v1h-1zM1629 343h1v1h-1zM230 347h1v1h-1zM405 347h1v1h-1zM580 347h1v1h-1zM755 347h1v1h-1zM929 347h1v1h-1zM1104 347h1v1h-1zM1279 347h1v1h-1zM1454 347h1v1h-1zM1629 347h1v1h-1zM230 352h1v1h-1zM405 352h1v1h-1zM580 352h1v1h-1zM755 352h1v1h-1zM929 352h1v1h-1zM1104 352h1v1h-1zM1279 352h1v1h-1zM1454 352h1v1h-1zM1629 352h1v1h-1zM230 357h1v1h-1zM405 357h1v1h-1zM580 357h1v1h-1zM755 357h1v1h-1zM929 357h1v1h-1zM1104 357h1v1h-1zM1279 357h1v1h-1zM1454 357h1v1h-1zM1629 357h1v1h-1zM230 366h1v1h-1zM405 366h1v1h-1zM580 366h1v1h-1zM755 366h1v1h-1zM929 366h1v1h-1zM1104 366h1v1h-1zM1279 366h1v1h-1zM1454 366h1v1h-1zM1629 366h1v1h-1zM230 371h1v1h-1zM405 371h1v1h-1zM580 371h1v1h-1zM755 371h1v1h-1zM929 371h1v1h-1zM1104 371h1v1h-1zM1279 371h1v1h-1zM1454 371h1v1h-1zM1629 371h1v1h-1zM230 375h1v1h-1zM405 375h1v1h-1zM580 375h1v1h-1zM755 375h1v1h-1zM929 375h1v1h-1zM1104 375h1v1h-1zM1279 375h1v1h-1zM1454 375h1v1h-1zM1629 375h1v1h-1zM230 380h1v1h-1zM405 380h1v1h-1zM580 380h1v1h-1zM755 380h1v1h-1zM929 380h1v1h-1zM1104 380h1v1h-1zM1279 380h1v1h-1zM1454 380h1v1h-1zM1629 380h1v1h-1zM230 389h1v1h-1zM405 389h1v1h-1zM580 389h1v1h-1zM755 389h1v1h-1zM929 389h1v1h-1zM1104 389h1v1h-1zM1279 389h1v1h-1zM1454 389h1v1h-1zM1629 389h1v1h-1zM230 394h1v1h-1zM405 394h1v1h-1zM580 394h1v1h-1zM755 394h1v1h-1zM929 394h1v1h-1zM1104 394h1v1h-1zM1279 394h1v1h-1zM1454 394h1v1h-1zM1629 394h1v1h-1zM230 398h1v1h-1zM405 398h1v1h-1zM580 398h1v1h-1zM755 398h1v1h-1zM929 398h1v1h-1zM1104 398h1v1h-1zM1279 398h1v1h-1zM1454 398h1v1h-1zM1629 398h1v1h-1zM230 403h1v1h-1zM405 403h1v1h-1zM580 403h1v1h-1zM755 403h1v1h-1zM929 403h1v1h-1zM1104 403h1v1h-1zM1279 403h1v1h-1zM1454 403h1v1h-1zM1629 403h1v1h-1zM230 412h1v1h-1zM405 412h1v1h-1zM580 412h1v1h-1zM755 412h1v1h-1zM929 412h1v1h-1zM1104 412h1v1h-1zM1279 412h1v1h-1zM1454 412h1v1h-1zM1629 412h1v1h-1zM230 417h1v1h-1zM405 417h1v1h-1zM580 417h1v1h-1zM755 417h1v1h-1zM929 417h1v1h-1zM1104 417h1v1h-1zM1279 417h1v1h-1zM1454 417h1v1h-1zM1629 417h1v1h-1zM230 422h1v1h-1zM405 422h1v1h-1zM580 422h1v1h-1zM755 422h1v1h-1zM929 422h1v1h-1zM1104 422h1v1h-1zM1279 422h1v1h-1zM1454 422h1v1h-1zM1629 422h1v1h-1zM230 426h1v1h-1zM405 426h1v1h-1zM580 426h1v1h-1zM755 426h1v1h-1zM929 426h1v1h-1zM1104 426h1v1h-1zM1279 426h1v1h-1zM1454 426h1v1h-1zM1629 426h1v1h-1zM230 436h1v1h-1zM405 436h1v1h-1zM580 436h1v1h-1zM755 436h1v1h-1zM929 436h1v1h-1zM1104 436h1v1h-1zM1279 436h1v1h-1zM1454 436h1v1h-1zM1629 436h1v1h-1zM230 440h1v1h-1zM405 440h1v1h-1zM580 440h1v1h-1zM755 440h1v1h-1zM929 440h1v1h-1zM1104 440h1v1h-1zM1279 440h1v1h-1zM1454 440h1v1h-1zM1629 440h1v1h-1zM230 445h1v1h-1zM405 445h1v1h-1zM580 445h1v1h-1zM755 445h1v1h-1zM929 445h1v1h-1zM1104 445h1v1h-1zM1279 445h1v1h-1zM1454 445h1v1h-1zM1629 445h1v1h-1zM230 450h1v1h-1zM405 450h1v1h-1zM580 450h1v1h-1zM755 450h1v1h-1zM929 450h1v1h-1zM1104 450h1v1h-1zM1279 450h1v1h-1zM1454 450h1v1h-1zM1629 450h1v1h-1zM230 459h1v1h-1zM405 459h1v1h-1zM580 459h1v1h-1zM755 459h1v1h-1zM929 459h1v1h-1zM1104 459h1v1h-1zM1279 459h1v1h-1zM1454 459h1v1h-1zM1629 459h1v1h-1zM230 464h1v1h-1zM405 464h1v1h-1zM580 464h1v1h-1zM755 464h1v1h-1zM929 464h1v1h-1zM1104 464h1v1h-1zM1279 464h1v1h-1zM1454 464h1v1h-1zM1629 464h1v1h-1zM230 468h1v1h-1zM405 468h1v1h-1zM580 468h1v1h-1zM755 468h1v1h-1zM929 468h1v1h-1zM1104 468h1v1h-1zM1279 468h1v1h-1zM1454 468h1v1h-1zM1629 468h1v1h-1zM230 473h1v1h-1zM405 473h1v1h-1zM580 473h1v1h-1zM755 473h1v1h-1zM929 473h1v1h-1zM1104 473h1v1h-1zM1279 473h1v1h-1zM1454 473h1v1h-1zM1629 473h1v1h-1zM230 482h1v1h-1zM405 482h1v1h-1zM580 482h1v1h-1zM755 482h1v1h-1zM929 482h1v1h-1zM1104 482h1v1h-1zM1279 482h1v1h-1zM1454 482h1v1h-1zM1629 482h1v1h-1zM230 487h1v1h-1zM405 487h1v1h-1zM580 487h1v1h-1zM755 487h1v1h-1zM929 487h1v1h-1zM1104 487h1v1h-1zM1279 487h1v1h-1zM1454 487h1v1h-1zM1629 487h1v1h-1zM230 491h1v1h-1zM405 491h1v1h-1zM580 491h1v1h-1zM755 491h1v1h-1zM929 491h1v1h-1zM1104 491h1v1h-1zM1279 491h1v1h-1zM1454 491h1v1h-1zM1629 491h1v1h-1zM230 496h1v1h-1zM405 496h1v1h-1zM580 496h1v1h-1zM755 496h1v1h-1zM929 496h1v1h-1zM1104 496h1v1h-1zM1279 496h1v1h-1zM1454 496h1v1h-1zM1629 496h1v1h-1zM230 505h1v1h-1zM405 505h1v1h-1zM580 505h1v1h-1zM755 505h1v1h-1zM929 505h1v1h-1zM1104 505h1v1h-1zM1279 505h1v1h-1zM1454 505h1v1h-1zM1629 505h1v1h-1zM230 510h1v1h-1zM405 510h1v1h-1zM580 510h1v1h-1zM755 510h1v1h-1zM929 510h1v1h-1zM1104 510h1v1h-1zM1279 510h1v1h-1zM1454 510h1v1h-1zM1629 510h1v1h-1zM230 515h1v1h-1zM405 515h1v1h-1zM580 515h1v1h-1zM755 515h1v1h-1zM929 515h1v1h-1zM1104 515h1v1h-1zM1279 515h1v1h-1zM1454 515h1v1h-1zM1629 515h1v1h-1zM230 519h1v1h-1zM405 519h1v1h-1zM580 519h1v1h-1zM755 519h1v1h-1zM929 519h1v1h-1zM1104 519h1v1h-1zM1279 519h1v1h-1zM1454 519h1v1h-1zM1629 519h1v1h-1zM20 526h1v1h-1zM90 526h1v1h-1zM125 526h1v1h-1zM160 526h1v1h-1zM195 526h1v1h-1zM230 526h1v1h-1zM265 526h1v1h-1zM300 526h1v1h-1zM335 526h1v1h-1zM370 526h1v1h-1zM405 526h1v1h-1zM440 526h1v1h-1zM475 526h1v1h-1zM510 526h1v1h-1zM545 526h1v1h-1zM580 526h1v1h-1zM615 526h1v1h-1zM650 526h1v1h-1zM685 526h1v1h-1zM720 526h1v1h-1zM755 526h1v1h-1zM789 526h1v1h-1zM824 526h1v1h-1zM859 526h1v1h-1zM894 526h1v1h-1zM929 526h1v1h-1zM964 526h1v1h-1zM999 526h1v1h-1zM1034 526h1v1h-1zM1069 526h1v1h-1zM1104 526h1v1h-1zM1139 526h1v1h-1zM1174 526h1v1h-1zM1209 526h1v1h-1zM1244 526h1v1h-1zM1279 526h1v1h-1zM1314 526h1v1h-1zM1349 526h1v1h-1zM1384 526h1v1h-1zM1419 526h1v1h-1zM1454 526h1v1h-1zM1489 526h1v1h-1zM1524 526h1v1h-1zM1559 526h1v1h-1zM1594 526h1v1h-1zM1629 526h1v1h-1zM1664 526h1v1h-1zM1699 526h1v1h-1zM1734 526h1v1h-1zM20 549h1v1h-1zM90 549h1v1h-1zM125 549h1v1h-1zM160 549h1v1h-1zM195 549h1v1h-1zM230 549h1v1h-1zM265 549h1v1h-1zM300 549h1v1h-1zM335 549h1v1h-1zM370 549h1v1h-1zM405 549h1v1h-1zM440 549h1v1h-1zM475 549h1v1h-1zM510 549h1v1h-1zM545 549h1v1h-1zM580 549h1v1h-1zM615 549h1v1h-1zM650 549h1v1h-1zM685 549h1v1h-1zM720 549h1v1h-1zM755 549h1v1h-1zM789 549h1v1h-1zM824 549h1v1h-1zM859 549h1v1h-1zM894 549h1v1h-1zM929 549h1v1h-1zM964 549h1v1h-1zM999 549h1v1h-1zM1034 549h1v1h-1zM1069 549h1v1h-1zM1104 549h1v1h-1zM1139 549h1v1h-1zM1174 549h1v1h-1zM1209 549h1v1h-1zM1244 549h1v1h-1zM1279 549h1v1h-1zM1314 549h1v1h-1zM1349 549h1v1h-1zM1384 549h1v1h-1zM1419 549h1v1h-1zM1454 549h1v1h-1zM1489 549h1v1h-1zM1524 549h1v1h-1zM1559 549h1v1h-1zM1594 549h1v1h-1zM1629 549h1v1h-1zM1664 549h1v1h-1zM1699 549h1v1h-1zM1734 549h1v1h-1zM20 572h1v1h-1zM90 572h1v1h-1zM125 572h1v1h-1zM160 572h1v1h-1zM195 572h1v1h-1zM230 572h1v1h-1zM265 572h1v1h-1zM300 572h1v1h-1zM335 572h1v1h-1zM370 572h1v1h-1zM405 572h1v1h-1zM440 572h1v1h-1zM475 572h1v1h-1zM510 572h1v1h-1zM545 572h1v1h-1zM580 572h1v1h-1zM615 572h1v1h-1zM650 572h1v1h-1zM685 572h1v1h-1zM720 572h1v1h-1zM755 572h1v1h-1zM789 572h1v1h-1zM824 572h1v1h-1zM859 572h1v1h-1zM894 572h1v1h-1zM929 572h1v1h-1zM964 572h1v1h-1zM999 572h1v1h-1zM1034 572h1v1h-1zM1069 572h1v1h-1zM1104 572h1v1h-1zM1139 572h1v1h-1zM1174 572h1v1h-1zM1209 572h1v1h-1zM1244 572h1v1h-1zM1279 572h1v1h-1zM1314 572h1v1h-1zM1349 572h1v1h-1zM1384 572h1v1h-1zM1419 572h1v1h-1zM1454 572h1v1h-1zM1489 572h1v1h-1zM1524 572h1v1h-1zM1559 572h1v1h-1zM1594 572h1v1h-1zM1629 572h1v1h-1zM1664 572h1v1h-1zM1699 572h1v1h-1zM1734 572h1v1h-1zM20 596h1v1h-1zM90 596h1v1h-1zM125 596h1v1h-1zM160 596h1v1h-1zM195 596h1v1h-1zM230 596h1v1h-1zM265 596h1v1h-1zM300 596h1v1h-1zM335 596h1v1h-1zM370 596h1v1h-1zM405 596h1v1h-1zM440 596h1v1h-1zM475 596h1v1h-1zM510 596h1v1h-1zM545 596h1v1h-1zM580 596h1v1h-1zM615 596h1v1h-1zM650 596h1v1h-1zM685 596h1v1h-1zM720 596h1v1h-1zM755 596h1v1h-1zM789 596h1v1h-1zM824 596h1v1h-1zM859 596h1v1h-1zM894 596h1v1h-1zM929 596h1v1h-1zM964 596h1v1h-1zM999 596h1v1h-1zM1034 596h1v1h-1zM1069 596h1v1h-1zM1104 596h1v1h-1zM1139 596h1v1h-1zM1174 596h1v1h-1zM1209 596h1v1h-1zM1244 596h1v1h-1zM1279 596h1v1h-1zM1314 596h1v1h-1zM1349 596h1v1h-1zM1384 596h1v1h-1zM1419 596h1v1h-1zM1454 596h1v1h-1zM1489 596h1v1h-1zM1524 596h1v1h-1zM1559 596h1v1h-1zM1594 596h1v1h-1zM1629 596h1v1h-1zM1664 596h1v1h-1zM1699 596h1v1h-1zM1734 596h1v1h-1zM20 619h1v1h-1zM90 619h1v1h-1zM125 619h1v1h-1zM160 619h1v1h-1zM195 619h1v1h-1zM230 619h1v1h-1zM265 619h1v1h-1zM300 619h1v1h-1zM335 619h1v1h-1zM370 619h1v1h-1zM405 619h1v1h-1zM440 619h1v1h-1zM475 619h1v1h-1zM510 619h1v1h-1zM545 619h1v1h-1zM580 619h1v1h-1zM615 619h1v1h-1zM650 619h1v1h-1zM685 619h1v1h-1zM720 619h1v1h-1zM755 619h1v1h-1zM789 619h1v1h-1zM824 619h1v1h-1zM859 619h1v1h-1zM894 619h1v1h-1zM929 619h1v1h-1zM964 619h1v1h-1zM999 619h1v1h-1zM1034 619h1v1h-1zM1069 619h1v1h-1zM1104 619h1v1h-1zM1139 619h1v1h-1zM1174 619h1v1h-1zM1209 619h1v1h-1zM1244 619h1v1h-1zM1279 619h1v1h-1zM1314 619h1v1h-1zM1349 619h1v1h-1zM1384 619h1v1h-1zM1419 619h1v1h-1zM1454 619h1v1h-1zM1489 619h1v1h-1zM1524 619h1v1h-1zM1559 619h1v1h-1zM1594 619h1v1h-1zM1629 619h1v1h-1zM1664 619h1v1h-1zM1699 619h1v1h-1zM1734 619h1v1h-1zM20 642h1v1h-1zM90 642h1v1h-1zM125 642h1v1h-1zM160 642h1v1h-1zM195 642h1v1h-1zM230 642h1v1h-1zM265 642h1v1h-1zM300 642h1v1h-1zM335 642h1v1h-1zM370 642h1v1h-1zM405 642h1v1h-1zM440 642h1v1h-1zM475 642h1v1h-1zM510 642h1v1h-1zM545 642h1v1h-1zM580 642h1v1h-1zM615 642h1v1h-1zM650 642h1v1h-1zM685 642h1v1h-1zM720 642h1v1h-1zM755 642h1v1h-1zM789 642h1v1h-1zM824 642h1v1h-1zM859 642h1v1h-1zM894 642h1v1h-1zM929 642h1v1h-1zM964 642h1v1h-1zM999 642h1v1h-1zM1034 642h1v1h-1zM1069 642h1v1h-1zM1104 642h1v1h-1zM1139 642h1v1h-1zM1174 642h1v1h-1zM1209 642h1v1h-1zM1244 642h1v1h-1zM1279 642h1v1h-1zM1314 642h1v1h-1zM1349 642h1v1h-1zM1384 642h1v1h-1zM1419 642h1v1h-1zM1454 642h1v1h-1zM1489 642h1v1h-1zM1524 642h1v1h-1zM1559 642h1v1h-1zM1594 642h1v1h-1zM1629 642h1v1h-1zM1664 642h1v1h-1zM1699 642h1v1h-1zM1734 642h1v1h-1zM20 665h1v1h-1zM90 665h1v1h-1zM125 665h1v1h-1zM160 665h1v1h-1zM195 665h1v1h-1zM230 665h1v1h-1zM265 665h1v1h-1zM300 665h1v1h-1zM335 665h1v1h-1zM370 665h1v1h-1zM405 665h1v1h-1zM440 665h1v1h-1zM475 665h1v1h-1zM510 665h1v1h-1zM545 665h1v1h-1zM580 665h1v1h-1zM615 665h1v1h-1zM650 665h1v1h-1zM685 665h1v1h-1zM720 665h1v1h-1zM755 665h1v1h-1zM789 665h1v1h-1zM824 665h1v1h-1zM859 665h1v1h-1zM894 665h1v1h-1zM929 665h1v1h-1zM964 665h1v1h-1zM999 665h1v1h-1zM1034 665h1v1h-1zM1069 665h1v1h-1zM1104 665h1v1h-1zM1139 665h1v1h-1zM1174 665h1v1h-1zM1209 665h1v1h-1zM1244 665h1v1h-1zM1279 665h1v1h-1zM1314 665h1v1h-1zM1349 665h1v1h-1zM1384 665h1v1h-1zM1419 665h1v1h-1zM1454 665h1v1h-1zM1489 665h1v1h-1zM1524 665h1v1h-1zM1559 665h1v1h-1zM1594 665h1v1h-1zM1629 665h1v1h-1zM1664 665h1v1h-1zM1699 665h1v1h-1zM1734 665h1v1h-1zM20 689h1v1h-1zM90 689h1v1h-1zM125 689h1v1h-1zM160 689h1v1h-1zM195 689h1v1h-1zM230 689h1v1h-1zM265 689h1v1h-1zM300 689h1v1h-1zM335 689h1v1h-1zM370 689h1v1h-1zM405 689h1v1h-1zM440 689h1v1h-1zM475 689h1v1h-1zM510 689h1v1h-1zM545 689h1v1h-1zM580 689h1v1h-1zM615 689h1v1h-1zM650 689h1v1h-1zM685 689h1v1h-1zM720 689h1v1h-1zM755 689h1v1h-1zM789 689h1v1h-1zM824 689h1v1h-1zM859 689h1v1h-1zM894 689h1v1h-1zM929 689h1v1h-1zM964 689h1v1h-1zM999 689h1v1h-1zM1034 689h1v1h-1zM1069 689h1v1h-1zM1104 689h1v1h-1zM1139 689h1v1h-1zM1174 689h1v1h-1zM1209 689h1v1h-1zM1244 689h1v1h-1zM1279 689h1v1h-1zM1314 689h1v1h-1zM1349 689h1v1h-1zM1384 689h1v1h-1zM1419 689h1v1h-1zM1454 689h1v1h-1zM1489 689h1v1h-1zM1524 689h1v1h-1zM1559 689h1v1h-1zM1594 689h1v1h-1zM1629 689h1v1h-1zM1664 689h1v1h-1zM1699 689h1v1h-1zM1734 689h1v1h-1zM20 712h1v1h-1zM90 712h1v1h-1zM125 712h1v1h-1zM160 712h1v1h-1zM195 712h1v1h-1zM230 712h1v1h-1zM265 712h1v1h-1zM300 712h1v1h-1zM335 712h1v1h-1zM370 712h1v1h-1zM405 712h1v1h-1zM440 712h1v1h-1zM475 712h1v1h-1zM510 712h1v1h-1zM545 712h1v1h-1zM580 712h1v1h-1zM615 712h1v1h-1zM650 712h1v1h-1zM685 712h1v1h-1zM720 712h1v1h-1zM755 712h1v1h-1zM789 712h1v1h-1zM824 712h1v1h-1zM859 712h1v1h-1zM894 712h1v1h-1zM929 712h1v1h-1zM964 712h1v1h-1zM999 712h1v1h-1zM1034 712h1v1h-1zM1069 712h1v1h-1zM1104 712h1v1h-1zM1139 712h1v1h-1zM1174 712h1v1h-1zM1209 712h1v1h-1zM1244 712h1v1h-1zM1279 712h1v1h-1zM1314 712h1v1h-1zM1349 712h1v1h-1zM1384 712h1v1h-1zM1419 712h1v1h-1zM1454 712h1v1h-1zM1489 712h1v1h-1zM1524 712h1v1h-1zM1559 712h1v1h-1zM1594 712h1v1h-1zM1629 712h1v1h-1zM1664 712h1v1h-1zM1699 712h1v1h-1zM1734 712h1v1h-1zM230 530h1v1h-1zM405 530h1v1h-1zM580 530h1v1h-1zM755 530h1v1h-1zM929 530h1v1h-1zM1104 530h1v1h-1zM1279 530h1v1h-1zM1454 530h1v1h-1zM1629 530h1v1h-1zM230 535h1v1h-1zM405 535h1v1h-1zM580 535h1v1h-1zM755 535h1v1h-1zM929 535h1v1h-1zM1104 535h1v1h-1zM1279 535h1v1h-1zM1454 535h1v1h-1zM1629 535h1v1h-1zM230 540h1v1h-1zM405 540h1v1h-1zM580 540h1v1h-1zM755 540h1v1h-1zM929 540h1v1h-1zM1104 540h1v1h-1zM1279 540h1v1h-1zM1454 540h1v1h-1zM1629 540h1v1h-1zM230 544h1v1h-1zM405 544h1v1h-1zM580 544h1v1h-1zM755 544h1v1h-1zM929 544h1v1h-1zM1104 544h1v1h-1zM1279 544h1v1h-1zM1454 544h1v1h-1zM1629 544h1v1h-1zM230 554h1v1h-1zM405 554h1v1h-1zM580 554h1v1h-1zM755 554h1v1h-1zM929 554h1v1h-1zM1104 554h1v1h-1zM1279 554h1v1h-1zM1454 554h1v1h-1zM1629 554h1v1h-1zM230 558h1v1h-1zM405 558h1v1h-1zM580 558h1v1h-1zM755 558h1v1h-1zM929 558h1v1h-1zM1104 558h1v1h-1zM1279 558h1v1h-1zM1454 558h1v1h-1zM1629 558h1v1h-1zM230 563h1v1h-1zM405 563h1v1h-1zM580 563h1v1h-1zM755 563h1v1h-1zM929 563h1v1h-1zM1104 563h1v1h-1zM1279 563h1v1h-1zM1454 563h1v1h-1zM1629 563h1v1h-1zM230 568h1v1h-1zM405 568h1v1h-1zM580 568h1v1h-1zM755 568h1v1h-1zM929 568h1v1h-1zM1104 568h1v1h-1zM1279 568h1v1h-1zM1454 568h1v1h-1zM1629 568h1v1h-1zM230 577h1v1h-1zM405 577h1v1h-1zM580 577h1v1h-1zM755 577h1v1h-1zM929 577h1v1h-1zM1104 577h1v1h-1zM1279 577h1v1h-1zM1454 577h1v1h-1zM1629 577h1v1h-1zM230 582h1v1h-1zM405 582h1v1h-1zM580 582h1v1h-1zM755 582h1v1h-1zM929 582h1v1h-1zM1104 582h1v1h-1zM1279 582h1v1h-1zM1454 582h1v1h-1zM1629 582h1v1h-1zM230 586h1v1h-1zM405 586h1v1h-1zM580 586h1v1h-1zM755 586h1v1h-1zM929 586h1v1h-1zM1104 586h1v1h-1zM1279 586h1v1h-1zM1454 586h1v1h-1zM1629 586h1v1h-1zM230 591h1v1h-1zM405 591h1v1h-1zM580 591h1v1h-1zM755 591h1v1h-1zM929 591h1v1h-1zM1104 591h1v1h-1zM1279 591h1v1h-1zM1454 591h1v1h-1zM1629 591h1v1h-1zM230 600h1v1h-1zM405 600h1v1h-1zM580 600h1v1h-1zM755 600h1v1h-1zM929 600h1v1h-1zM1104 600h1v1h-1zM1279 600h1v1h-1zM1454 600h1v1h-1zM1629 600h1v1h-1zM230 605h1v1h-1zM405 605h1v1h-1zM580 605h1v1h-1zM755 605h1v1h-1zM929 605h1v1h-1zM1104 605h1v1h-1zM1279 605h1v1h-1zM1454 605h1v1h-1zM1629 605h1v1h-1zM230 610h1v1h-1zM405 610h1v1h-1zM580 610h1v1h-1zM755 610h1v1h-1zM929 610h1v1h-1zM1104 610h1v1h-1zM1279 610h1v1h-1zM1454 610h1v1h-1zM1629 610h1v1h-1zM230 614h1v1h-1zM405 614h1v1h-1zM580 614h1v1h-1zM755 614h1v1h-1zM929 614h1v1h-1zM1104 614h1v1h-1zM1279 614h1v1h-1zM1454 614h1v1h-1zM1629 614h1v1h-1zM230 623h1v1h-1zM405 623h1v1h-1zM580 623h1v1h-1zM755 623h1v1h-1zM929 623h1v1h-1zM1104 623h1v1h-1zM1279 623h1v1h-1zM1454 623h1v1h-1zM1629 623h1v1h-1zM230 628h1v1h-1zM405 628h1v1h-1zM580 628h1v1h-1zM755 628h1v1h-1zM929 628h1v1h-1zM1104 628h1v1h-1zM1279 628h1v1h-1zM1454 628h1v1h-1zM1629 628h1v1h-1zM230 633h1v1h-1zM405 633h1v1h-1zM580 633h1v1h-1zM755 633h1v1h-1zM929 633h1v1h-1zM1104 633h1v1h-1zM1279 633h1v1h-1zM1454 633h1v1h-1zM1629 633h1v1h-1zM230 637h1v1h-1zM405 637h1v1h-1zM580 637h1v1h-1zM755 637h1v1h-1zM929 637h1v1h-1zM1104 637h1v1h-1zM1279 637h1v1h-1zM1454 637h1v1h-1zM1629 637h1v1h-1zM230 647h1v1h-1zM405 647h1v1h-1zM580 647h1v1h-1zM755 647h1v1h-1zM929 647h1v1h-1zM1104 647h1v1h-1zM1279 647h1v1h-1zM1454 647h1v1h-1zM1629 647h1v1h-1zM230 651h1v1h-1zM405 651h1v1h-1zM580 651h1v1h-1zM755 651h1v1h-1zM929 651h1v1h-1zM1104 651h1v1h-1zM1279 651h1v1h-1zM1454 651h1v1h-1zM1629 651h1v1h-1zM230 656h1v1h-1zM405 656h1v1h-1zM580 656h1v1h-1zM755 656h1v1h-1zM929 656h1v1h-1zM1104 656h1v1h-1zM1279 656h1v1h-1zM1454 656h1v1h-1zM1629 656h1v1h-1zM230 661h1v1h-1zM405 661h1v1h-1zM580 661h1v1h-1zM755 661h1v1h-1zM929 661h1v1h-1zM1104 661h1v1h-1zM1279 661h1v1h-1zM1454 661h1v1h-1zM1629 661h1v1h-1zM230 670h1v1h-1zM405 670h1v1h-1zM580 670h1v1h-1zM755 670h1v1h-1zM929 670h1v1h-1zM1104 670h1v1h-1zM1279 670h1v1h-1zM1454 670h1v1h-1zM1629 670h1v1h-1zM230 675h1v1h-1zM405 675h1v1h-1zM580 675h1v1h-1zM755 675h1v1h-1zM929 675h1v1h-1zM1104 675h1v1h-1zM1279 675h1v1h-1zM1454 675h1v1h-1zM1629 675h1v1h-1zM230 679h1v1h-1zM405 679h1v1h-1zM580 679h1v1h-1zM755 679h1v1h-1zM929 679h1v1h-1zM1104 679h1v1h-1zM1279 679h1v1h-1zM1454 679h1v1h-1zM1629 679h1v1h-1zM230 684h1v1h-1zM405 684h1v1h-1zM580 684h1v1h-1zM755 684h1v1h-1zM929 684h1v1h-1zM1104 684h1v1h-1zM1279 684h1v1h-1zM1454 684h1v1h-1zM1629 684h1v1h-1zM230 693h1v1h-1zM405 693h1v1h-1zM580 693h1v1h-1zM755 693h1v1h-1zM929 693h1v1h-1zM1104 693h1v1h-1zM1279 693h1v1h-1zM1454 693h1v1h-1zM1629 693h1v1h-1zM230 698h1v1h-1zM405 698h1v1h-1zM580 698h1v1h-1zM755 698h1v1h-1zM929 698h1v1h-1zM1104 698h1v1h-1zM1279 698h1v1h-1zM1454 698h1v1h-1zM1629 698h1v1h-1zM230 703h1v1h-1zM405 703h1v1h-1zM580 703h1v1h-1zM755 703h1v1h-1zM929 703h1v1h-1zM1104 703h1v1h-1zM1279 703h1v1h-1zM1454 703h1v1h-1zM1629 703h1v1h-1zM230 707h1v1h-1zM405 707h1v1h-1zM580 707h1v1h-1zM755 707h1v1h-1zM929 707h1v1h-1zM1104 707h1v1h-1zM1279 707h1v1h-1zM1454 707h1v1h-1zM1629 707h1v1h-1zM230 716h1v1h-1zM405 716h1v1h-1zM580 716h1v1h-1zM755 716h1v1h-1zM929 716h1v1h-1zM1104 716h1v1h-1zM1279 716h1v1h-1zM1454 716h1v1h-1zM1629 716h1v1h-1zM230 721h1v1h-1zM405 721h1v1h-1zM580 721h1v1h-1zM755 721h1v1h-1zM929 721h1v1h-1zM1104 721h1v1h-1zM1279 721h1v1h-1zM1454 721h1v1h-1zM1629 721h1v1h-1zM230 726h1v1h-1zM405 726h1v1h-1zM580 726h1v1h-1zM755 726h1v1h-1zM929 726h1v1h-1zM1104 726h1v1h-1zM1279 726h1v1h-1zM1454 726h1v1h-1zM1629 726h1v1h-1zM230 730h1v1h-1zM405 730h1v1h-1zM580 730h1v1h-1zM755 730h1v1h-1zM929 730h1v1h-1zM1104 730h1v1h-1zM1279 730h1v1h-1zM1454 730h1v1h-1zM1629 730h1v1h-1zM230 740h1v1h-1zM405 740h1v1h-1zM580 740h1v1h-1zM755 740h1v1h-1zM929 740h1v1h-1zM1104 740h1v1h-1zM1279 740h1v1h-1zM1454 740h1v1h-1zM1629 740h1v1h-1zM230 744h1v1h-1zM405 744h1v1h-1zM580 744h1v1h-1zM755 744h1v1h-1zM929 744h1v1h-1zM1104 744h1v1h-1zM1279 744h1v1h-1zM1454 744h1v1h-1zM1629 744h1v1h-1zM230 749h1v1h-1zM405 749h1v1h-1zM580 749h1v1h-1zM755 749h1v1h-1zM929 749h1v1h-1zM1104 749h1v1h-1zM1279 749h1v1h-1zM1454 749h1v1h-1zM1629 749h1v1h-1zM230 754h1v1h-1zM405 754h1v1h-1zM580 754h1v1h-1zM755 754h1v1h-1zM929 754h1v1h-1zM1104 754h1v1h-1zM1279 754h1v1h-1zM1454 754h1v1h-1zM1629 754h1v1h-1zM20 779h1v1h-1zM90 779h1v1h-1zM125 779h1v1h-1zM160 779h1v1h-1zM195 779h1v1h-1zM230 779h1v1h-1zM265 779h1v1h-1zM300 779h1v1h-1zM335 779h1v1h-1zM370 779h1v1h-1zM405 779h1v1h-1zM440 779h1v1h-1zM475 779h1v1h-1zM510 779h1v1h-1zM545 779h1v1h-1zM580 779h1v1h-1zM615 779h1v1h-1zM650 779h1v1h-1zM685 779h1v1h-1zM720 779h1v1h-1zM755 779h1v1h-1zM789 779h1v1h-1zM824 779h1v1h-1zM859 779h1v1h-1zM894 779h1v1h-1zM929 779h1v1h-1zM964 779h1v1h-1zM999 779h1v1h-1zM1034 779h1v1h-1zM1069 779h1v1h-1zM1104 779h1v1h-1zM1139 779h1v1h-1zM1174 779h1v1h-1zM1209 779h1v1h-1zM1244 779h1v1h-1zM1279 779h1v1h-1zM1314 779h1v1h-1zM1349 779h1v1h-1zM1384 779h1v1h-1zM1419 779h1v1h-1zM1454 779h1v1h-1zM1489 779h1v1h-1zM1524 779h1v1h-1zM1559 779h1v1h-1zM1594 779h1v1h-1zM1629 779h1v1h-1zM1664 779h1v1h-1zM1699 779h1v1h-1zM1734 779h1v1h-1zM20 802h1v1h-1zM90 802h1v1h-1zM125 802h1v1h-1zM160 802h1v1h-1zM195 802h1v1h-1zM230 802h1v1h-1zM265 802h1v1h-1zM300 802h1v1h-1zM335 802h1v1h-1zM370 802h1v1h-1zM405 802h1v1h-1zM440 802h1v1h-1zM475 802h1v1h-1zM510 802h1v1h-1zM545 802h1v1h-1zM580 802h1v1h-1zM615 802h1v1h-1zM650 802h1v1h-1zM685 802h1v1h-1zM720 802h1v1h-1zM755 802h1v1h-1zM789 802h1v1h-1zM824 802h1v1h-1zM859 802h1v1h-1zM894 802h1v1h-1zM929 802h1v1h-1zM964 802h1v1h-1zM999 802h1v1h-1zM1034 802h1v1h-1zM1069 802h1v1h-1zM1104 802h1v1h-1zM1139 802h1v1h-1zM1174 802h1v1h-1zM1209 802h1v1h-1zM1244 802h1v1h-1zM1279 802h1v1h-1zM1314 802h1v1h-1zM1349 802h1v1h-1zM1384 802h1v1h-1zM1419 802h1v1h-1zM1454 802h1v1h-1zM1489 802h1v1h-1zM1524 802h1v1h-1zM1559 802h1v1h-1zM1594 802h1v1h-1zM1629 802h1v1h-1zM1664 802h1v1h-1zM1699 802h1v1h-1zM1734 802h1v1h-1zM20 825h1v1h-1zM90 825h1v1h-1zM125 825h1v1h-1zM160 825h1v1h-1zM195 825h1v1h-1zM230 825h1v1h-1zM265 825h1v1h-1zM300 825h1v1h-1zM335 825h1v1h-1zM370 825h1v1h-1zM405 825h1v1h-1zM440 825h1v1h-1zM475 825h1v1h-1zM510 825h1v1h-1zM545 825h1v1h-1zM580 825h1v1h-1zM615 825h1v1h-1zM650 825h1v1h-1zM685 825h1v1h-1zM720 825h1v1h-1zM755 825h1v1h-1zM789 825h1v1h-1zM824 825h1v1h-1zM859 825h1v1h-1zM894 825h1v1h-1zM929 825h1v1h-1zM964 825h1v1h-1zM999 825h1v1h-1zM1034 825h1v1h-1zM1069 825h1v1h-1zM1104 825h1v1h-1zM1139 825h1v1h-1zM1174 825h1v1h-1zM1209 825h1v1h-1zM1244 825h1v1h-1zM1279 825h1v1h-1zM1314 825h1v1h-1zM1349 825h1v1h-1zM1384 825h1v1h-1zM1419 825h1v1h-1zM1454 825h1v1h-1zM1489 825h1v1h-1zM1524 825h1v1h-1zM1559 825h1v1h-1zM1594 825h1v1h-1zM1629 825h1v1h-1zM1664 825h1v1h-1zM1699 825h1v1h-1zM1734 825h1v1h-1zM20 849h1v1h-1zM90 849h1v1h-1zM125 849h1v1h-1zM160 849h1v1h-1zM195 849h1v1h-1zM230 849h1v1h-1zM265 849h1v1h-1zM300 849h1v1h-1zM335 849h1v1h-1zM370 849h1v1h-1zM405 849h1v1h-1zM440 849h1v1h-1zM475 849h1v1h-1zM510 849h1v1h-1zM545 849h1v1h-1zM580 849h1v1h-1zM615 849h1v1h-1zM650 849h1v1h-1zM685 849h1v1h-1zM720 849h1v1h-1zM755 849h1v1h-1zM789 849h1v1h-1zM824 849h1v1h-1zM859 849h1v1h-1zM894 849h1v1h-1zM929 849h1v1h-1zM964 849h1v1h-1zM999 849h1v1h-1zM1034 849h1v1h-1zM1069 849h1v1h-1zM1104 849h1v1h-1zM1139 849h1v1h-1zM1174 849h1v1h-1zM1209 849h1v1h-1zM1244 849h1v1h-1zM1279 849h1v1h-1zM1314 849h1v1h-1zM1349 849h1v1h-1zM1384 849h1v1h-1zM1419 849h1v1h-1zM1454 849h1v1h-1zM1489 849h1v1h-1zM1524 849h1v1h-1zM1559 849h1v1h-1zM1594 849h1v1h-1zM1629 849h1v1h-1zM1664 849h1v1h-1zM1699 849h1v1h-1zM1734 849h1v1h-1zM20 872h1v1h-1zM90 872h1v1h-1zM125 872h1v1h-1zM160 872h1v1h-1zM195 872h1v1h-1zM230 872h1v1h-1zM265 872h1v1h-1zM300 872h1v1h-1zM335 872h1v1h-1zM370 872h1v1h-1zM405 872h1v1h-1zM440 872h1v1h-1zM475 872h1v1h-1zM510 872h1v1h-1zM545 872h1v1h-1zM580 872h1v1h-1zM615 872h1v1h-1zM650 872h1v1h-1zM685 872h1v1h-1zM720 872h1v1h-1zM755 872h1v1h-1zM789 872h1v1h-1zM824 872h1v1h-1zM859 872h1v1h-1zM894 872h1v1h-1zM929 872h1v1h-1zM964 872h1v1h-1zM999 872h1v1h-1zM1034 872h1v1h-1zM1069 872h1v1h-1zM1104 872h1v1h-1zM1139 872h1v1h-1zM1174 872h1v1h-1zM1209 872h1v1h-1zM1244 872h1v1h-1zM1279 872h1v1h-1zM1314 872h1v1h-1zM1349 872h1v1h-1zM1384 872h1v1h-1zM1419 872h1v1h-1zM1454 872h1v1h-1zM1489 872h1v1h-1zM1524 872h1v1h-1zM1559 872h1v1h-1zM1594 872h1v1h-1zM1629 872h1v1h-1zM1664 872h1v1h-1zM1699 872h1v1h-1zM1734 872h1v1h-1zM20 895h1v1h-1zM90 895h1v1h-1zM125 895h1v1h-1zM160 895h1v1h-1zM195 895h1v1h-1zM230 895h1v1h-1zM265 895h1v1h-1zM300 895h1v1h-1zM335 895h1v1h-1zM370 895h1v1h-1zM405 895h1v1h-1zM440 895h1v1h-1zM475 895h1v1h-1zM510 895h1v1h-1zM545 895h1v1h-1zM580 895h1v1h-1zM615 895h1v1h-1zM650 895h1v1h-1zM685 895h1v1h-1zM720 895h1v1h-1zM755 895h1v1h-1zM789 895h1v1h-1zM824 895h1v1h-1zM859 895h1v1h-1zM894 895h1v1h-1zM929 895h1v1h-1zM964 895h1v1h-1zM999 895h1v1h-1zM1034 895h1v1h-1zM1069 895h1v1h-1zM1104 895h1v1h-1zM1139 895h1v1h-1zM1174 895h1v1h-1zM1209 895h1v1h-1zM1244 895h1v1h-1zM1279 895h1v1h-1zM1314 895h1v1h-1zM1349 895h1v1h-1zM1384 895h1v1h-1zM1419 895h1v1h-1zM1454 895h1v1h-1zM1489 895h1v1h-1zM1524 895h1v1h-1zM1559 895h1v1h-1zM1594 895h1v1h-1zM1629 895h1v1h-1zM1664 895h1v1h-1zM1699 895h1v1h-1zM1734 895h1v1h-1zM20 918h1v1h-1zM90 918h1v1h-1zM125 918h1v1h-1zM160 918h1v1h-1zM195 918h1v1h-1zM230 918h1v1h-1zM265 918h1v1h-1zM300 918h1v1h-1zM335 918h1v1h-1zM370 918h1v1h-1zM405 918h1v1h-1zM440 918h1v1h-1zM475 918h1v1h-1zM510 918h1v1h-1zM545 918h1v1h-1zM580 918h1v1h-1zM615 918h1v1h-1zM650 918h1v1h-1zM685 918h1v1h-1zM720 918h1v1h-1zM755 918h1v1h-1zM789 918h1v1h-1zM824 918h1v1h-1zM859 918h1v1h-1zM894 918h1v1h-1zM929 918h1v1h-1zM964 918h1v1h-1zM999 918h1v1h-1zM1034 918h1v1h-1zM1069 918h1v1h-1zM1104 918h1v1h-1zM1139 918h1v1h-1zM1174 918h1v1h-1zM1209 918h1v1h-1zM1244 918h1v1h-1zM1279 918h1v1h-1zM1314 918h1v1h-1zM1349 918h1v1h-1zM1384 918h1v1h-1zM1419 918h1v1h-1zM1454 918h1v1h-1zM1489 918h1v1h-1zM1524 918h1v1h-1zM1559 918h1v1h-1zM1594 918h1v1h-1zM1629 918h1v1h-1zM1664 918h1v1h-1zM1699 918h1v1h-1zM1734 918h1v1h-1zM20 942h1v1h-1zM90 942h1v1h-1zM125 942h1v1h-1zM160 942h1v1h-1zM195 942h1v1h-1zM230 942h1v1h-1zM265 942h1v1h-1zM300 942h1v1h-1zM335 942h1v1h-1zM370 942h1v1h-1zM405 942h1v1h-1zM440 942h1v1h-1zM475 942h1v1h-1zM510 942h1v1h-1zM545 942h1v1h-1zM580 942h1v1h-1zM615 942h1v1h-1zM650 942h1v1h-1zM685 942h1v1h-1zM720 942h1v1h-1zM755 942h1v1h-1zM789 942h1v1h-1zM824 942h1v1h-1zM859 942h1v1h-1zM894 942h1v1h-1zM929 942h1v1h-1zM964 942h1v1h-1zM999 942h1v1h-1zM1034 942h1v1h-1zM1069 942h1v1h-1zM1104 942h1v1h-1zM1139 942h1v1h-1zM1174 942h1v1h-1zM1209 942h1v1h-1zM1244 942h1v1h-1zM1279 942h1v1h-1zM1314 942h1v1h-1zM1349 942h1v1h-1zM1384 942h1v1h-1zM1419 942h1v1h-1zM1454 942h1v1h-1zM1489 942h1v1h-1zM1524 942h1v1h-1zM1559 942h1v1h-1zM1594 942h1v1h-1zM1629 942h1v1h-1zM1664 942h1v1h-1zM1699 942h1v1h-1zM1734 942h1v1h-1zM20 988h1v1h-1zM90 988h1v1h-1zM125 988h1v1h-1zM160 988h1v1h-1zM195 988h1v1h-1zM230 988h1v1h-1zM265 988h1v1h-1zM300 988h1v1h-1zM335 988h1v1h-1zM370 988h1v1h-1zM405 988h1v1h-1zM440 988h1v1h-1zM475 988h1v1h-1zM510 988h1v1h-1zM545 988h1v1h-1zM580 988h1v1h-1zM615 988h1v1h-1zM650 988h1v1h-1zM685 988h1v1h-1zM720 988h1v1h-1zM755 988h1v1h-1zM789 988h1v1h-1zM824 988h1v1h-1zM859 988h1v1h-1zM894 988h1v1h-1zM929 988h1v1h-1zM964 988h1v1h-1zM999 988h1v1h-1zM1034 988h1v1h-1zM1069 988h1v1h-1zM1104 988h1v1h-1zM1139 988h1v1h-1zM1174 988h1v1h-1zM1209 988h1v1h-1zM1244 988h1v1h-1zM1279 988h1v1h-1zM1314 988h1v1h-1zM1349 988h1v1h-1zM1384 988h1v1h-1zM1419 988h1v1h-1zM1454 988h1v1h-1zM1489 988h1v1h-1zM1524 988h1v1h-1zM1559 988h1v1h-1zM1594 988h1v1h-1zM1629 988h1v1h-1zM1664 988h1v1h-1zM1699 988h1v1h-1zM1734 988h1v1h-1zM230 784h1v1h-1zM405 784h1v1h-1zM580 784h1v1h-1zM755 784h1v1h-1zM929 784h1v1h-1zM1104 784h1v1h-1zM1279 784h1v1h-1zM1454 784h1v1h-1zM1629 784h1v1h-1zM230 788h1v1h-1zM405 788h1v1h-1zM580 788h1v1h-1zM755 788h1v1h-1zM929 788h1v1h-1zM1104 788h1v1h-1zM1279 788h1v1h-1zM1454 788h1v1h-1zM1629 788h1v1h-1zM230 793h1v1h-1zM405 793h1v1h-1zM580 793h1v1h-1zM755 793h1v1h-1zM929 793h1v1h-1zM1104 793h1v1h-1zM1279 793h1v1h-1zM1454 793h1v1h-1zM1629 793h1v1h-1zM230 798h1v1h-1zM405 798h1v1h-1zM580 798h1v1h-1zM755 798h1v1h-1zM929 798h1v1h-1zM1104 798h1v1h-1zM1279 798h1v1h-1zM1454 798h1v1h-1zM1629 798h1v1h-1zM230 807h1v1h-1zM405 807h1v1h-1zM580 807h1v1h-1zM755 807h1v1h-1zM929 807h1v1h-1zM1104 807h1v1h-1zM1279 807h1v1h-1zM1454 807h1v1h-1zM1629 807h1v1h-1zM230 811h1v1h-1zM405 811h1v1h-1zM580 811h1v1h-1zM755 811h1v1h-1zM929 811h1v1h-1zM1104 811h1v1h-1zM1279 811h1v1h-1zM1454 811h1v1h-1zM1629 811h1v1h-1zM230 816h1v1h-1zM405 816h1v1h-1zM580 816h1v1h-1zM755 816h1v1h-1zM929 816h1v1h-1zM1104 816h1v1h-1zM1279 816h1v1h-1zM1454 816h1v1h-1zM1629 816h1v1h-1zM230 821h1v1h-1zM405 821h1v1h-1zM580 821h1v1h-1zM755 821h1v1h-1zM929 821h1v1h-1zM1104 821h1v1h-1zM1279 821h1v1h-1zM1454 821h1v1h-1zM1629 821h1v1h-1zM230 830h1v1h-1zM405 830h1v1h-1zM580 830h1v1h-1zM755 830h1v1h-1zM929 830h1v1h-1zM1104 830h1v1h-1zM1279 830h1v1h-1zM1454 830h1v1h-1zM1629 830h1v1h-1zM230 835h1v1h-1zM405 835h1v1h-1zM580 835h1v1h-1zM755 835h1v1h-1zM929 835h1v1h-1zM1104 835h1v1h-1zM1279 835h1v1h-1zM1454 835h1v1h-1zM1629 835h1v1h-1zM230 839h1v1h-1zM405 839h1v1h-1zM580 839h1v1h-1zM755 839h1v1h-1zM929 839h1v1h-1zM1104 839h1v1h-1zM1279 839h1v1h-1zM1454 839h1v1h-1zM1629 839h1v1h-1zM230 844h1v1h-1zM405 844h1v1h-1zM580 844h1v1h-1zM755 844h1v1h-1zM929 844h1v1h-1zM1104 844h1v1h-1zM1279 844h1v1h-1zM1454 844h1v1h-1zM1629 844h1v1h-1zM230 853h1v1h-1zM405 853h1v1h-1zM580 853h1v1h-1zM755 853h1v1h-1zM929 853h1v1h-1zM1104 853h1v1h-1zM1279 853h1v1h-1zM1454 853h1v1h-1zM1629 853h1v1h-1zM230 858h1v1h-1zM405 858h1v1h-1zM580 858h1v1h-1zM755 858h1v1h-1zM929 858h1v1h-1zM1104 858h1v1h-1zM1279 858h1v1h-1zM1454 858h1v1h-1zM1629 858h1v1h-1zM230 863h1v1h-1zM405 863h1v1h-1zM580 863h1v1h-1zM755 863h1v1h-1zM929 863h1v1h-1zM1104 863h1v1h-1zM1279 863h1v1h-1zM1454 863h1v1h-1zM1629 863h1v1h-1zM230 867h1v1h-1zM405 867h1v1h-1zM580 867h1v1h-1zM755 867h1v1h-1zM929 867h1v1h-1zM1104 867h1v1h-1zM1279 867h1v1h-1zM1454 867h1v1h-1zM1629 867h1v1h-1zM230 877h1v1h-1zM405 877h1v1h-1zM580 877h1v1h-1zM755 877h1v1h-1zM929 877h1v1h-1zM1104 877h1v1h-1zM1279 877h1v1h-1zM1454 877h1v1h-1zM1629 877h1v1h-1zM230 881h1v1h-1zM405 881h1v1h-1zM580 881h1v1h-1zM755 881h1v1h-1zM929 881h1v1h-1zM1104 881h1v1h-1zM1279 881h1v1h-1zM1454 881h1v1h-1zM1629 881h1v1h-1zM230 886h1v1h-1zM405 886h1v1h-1zM580 886h1v1h-1zM755 886h1v1h-1zM929 886h1v1h-1zM1104 886h1v1h-1zM1279 886h1v1h-1zM1454 886h1v1h-1zM1629 886h1v1h-1zM230 891h1v1h-1zM405 891h1v1h-1zM580 891h1v1h-1zM755 891h1v1h-1zM929 891h1v1h-1zM1104 891h1v1h-1zM1279 891h1v1h-1zM1454 891h1v1h-1zM1629 891h1v1h-1zM230 900h1v1h-1zM405 900h1v1h-1zM580 900h1v1h-1zM755 900h1v1h-1zM929 900h1v1h-1zM1104 900h1v1h-1zM1279 900h1v1h-1zM1454 900h1v1h-1zM1629 900h1v1h-1zM230 904h1v1h-1zM405 904h1v1h-1zM580 904h1v1h-1zM755 904h1v1h-1zM929 904h1v1h-1zM1104 904h1v1h-1zM1279 904h1v1h-1zM1454 904h1v1h-1zM1629 904h1v1h-1zM230 909h1v1h-1zM405 909h1v1h-1zM580 909h1v1h-1zM755 909h1v1h-1zM929 909h1v1h-1zM1104 909h1v1h-1zM1279 909h1v1h-1zM1454 909h1v1h-1zM1629 909h1v1h-1zM230 914h1v1h-1zM405 914h1v1h-1zM580 914h1v1h-1zM755 914h1v1h-1zM929 914h1v1h-1zM1104 914h1v1h-1zM1279 914h1v1h-1zM1454 914h1v1h-1zM1629 914h1v1h-1zM230 923h1v1h-1zM405 923h1v1h-1zM580 923h1v1h-1zM755 923h1v1h-1zM929 923h1v1h-1zM1104 923h1v1h-1zM1279 923h1v1h-1zM1454 923h1v1h-1zM1629 923h1v1h-1zM230 928h1v1h-1zM405 928h1v1h-1zM580 928h1v1h-1zM755 928h1v1h-1zM929 928h1v1h-1zM1104 928h1v1h-1zM1279 928h1v1h-1zM1454 928h1v1h-1zM1629 928h1v1h-1zM230 932h1v1h-1zM405 932h1v1h-1zM580 932h1v1h-1zM755 932h1v1h-1zM929 932h1v1h-1zM1104 932h1v1h-1zM1279 932h1v1h-1zM1454 932h1v1h-1zM1629 932h1v1h-1zM230 937h1v1h-1zM405 937h1v1h-1zM580 937h1v1h-1zM755 937h1v1h-1zM929 937h1v1h-1zM1104 937h1v1h-1zM1279 937h1v1h-1zM1454 937h1v1h-1zM1629 937h1v1h-1zM230 946h1v1h-1zM405 946h1v1h-1zM580 946h1v1h-1zM755 946h1v1h-1zM929 946h1v1h-1zM1104 946h1v1h-1zM1279 946h1v1h-1zM1454 946h1v1h-1zM1629 946h1v1h-1zM230 951h1v1h-1zM405 951h1v1h-1zM580 951h1v1h-1zM755 951h1v1h-1zM929 951h1v1h-1zM1104 951h1v1h-1zM1279 951h1v1h-1zM1454 951h1v1h-1zM1629 951h1v1h-1zM230 956h1v1h-1zM405 956h1v1h-1zM580 956h1v1h-1zM755 956h1v1h-1zM929 956h1v1h-1zM1104 956h1v1h-1zM1279 956h1v1h-1zM1454 956h1v1h-1zM1629 956h1v1h-1zM230 960h1v1h-1zM405 960h1v1h-1zM580 960h1v1h-1zM755 960h1v1h-1zM929 960h1v1h-1zM1104 960h1v1h-1zM1279 960h1v1h-1zM1454 960h1v1h-1zM1629 960h1v1h-1zM230 970h1v1h-1zM405 970h1v1h-1zM580 970h1v1h-1zM755 970h1v1h-1zM929 970h1v1h-1zM1104 970h1v1h-1zM1279 970h1v1h-1zM1454 970h1v1h-1zM1629 970h1v1h-1zM230 974h1v1h-1zM405 974h1v1h-1zM580 974h1v1h-1zM755 974h1v1h-1zM929 974h1v1h-1zM1104 974h1v1h-1zM1279 974h1v1h-1zM1454 974h1v1h-1zM1629 974h1v1h-1zM230 979h1v1h-1zM405 979h1v1h-1zM580 979h1v1h-1zM755 979h1v1h-1zM929 979h1v1h-1zM1104 979h1v1h-1zM1279 979h1v1h-1zM1454 979h1v1h-1zM1629 979h1v1h-1zM230 984h1v1h-1zM405 984h1v1h-1zM580 984h1v1h-1zM755 984h1v1h-1zM929 984h1v1h-1zM1104 984h1v1h-1zM1279 984h1v1h-1zM1454 984h1v1h-1zM1629 984h1v1h-1z" fill="#b8b8b8"/>
<rect x="3" y="290" width="1748" height="2" fill="#727272"/>
<rect x="3" y="524" width="1748" height="2" fill="#727272"/>
<rect x="3" y="758" width="1748" height="2" fill="#727272"/>
<line x1="3" y1="267.5" x2="1722" y2="267.5" stroke="#c8c8c8" stroke-width="1.2" stroke-dasharray="5 5"/>
<line x1="3" y1="431.5" x2="1722" y2="431.5" stroke="#c8c8c8" stroke-width="1.2" stroke-dasharray="5 5"/>
<line x1="3" y1="735.5" x2="1722" y2="735.5" stroke="#c8c8c8" stroke-width="1.2" stroke-dasharray="5 5"/>
<line x1="3" y1="965.5" x2="1722" y2="965.5" stroke="#c8c8c8" stroke-width="1.2" stroke-dasharray="5 5"/>
<rect x="1713.8" y="74.0" width="33.2" height="15" fill="#000"/>
<text x="1745.8" y="86.0" font-size="12.6" fill="#ecea22" text-anchor="end" textLength="27.2" lengthAdjust="spacingAndGlyphs">40 V</text>
<rect x="1713.8" y="97.0" width="33.2" height="15" fill="#000"/>
<text x="1745.8" y="109.0" font-size="12.6" fill="#ecea22" text-anchor="end" textLength="27.2" lengthAdjust="spacingAndGlyphs">35 V</text>
<rect x="1713.8" y="121.0" width="33.2" height="15" fill="#000"/>
<text x="1745.8" y="133.0" font-size="12.6" fill="#ecea22" text-anchor="end" textLength="27.2" lengthAdjust="spacingAndGlyphs">30 V</text>
<rect x="1713.8" y="144.0" width="33.2" height="15" fill="#000"/>
<text x="1745.8" y="156.0" font-size="12.6" fill="#ecea22" text-anchor="end" textLength="27.2" lengthAdjust="spacingAndGlyphs">25 V</text>
<rect x="1713.8" y="167.0" width="33.2" height="15" fill="#000"/>
<text x="1745.8" y="179.0" font-size="12.6" fill="#ecea22" text-anchor="end" textLength="27.2" lengthAdjust="spacingAndGlyphs">20 V</text>
<rect x="1713.8" y="190.0" width="33.2" height="15" fill="#000"/>
<text x="1745.8" y="202.0" font-size="12.6" fill="#ecea22" text-anchor="end" textLength="27.2" lengthAdjust="spacingAndGlyphs">15 V</text>
<rect x="1713.8" y="214.0" width="33.2" height="15" fill="#000"/>
<text x="1745.8" y="226.0" font-size="12.6" fill="#ecea22" text-anchor="end" textLength="27.2" lengthAdjust="spacingAndGlyphs">10 V</text>
<rect x="1721.1" y="237.0" width="25.9" height="15" fill="#000"/>
<text x="1745.8" y="249.0" font-size="12.6" fill="#ecea22" text-anchor="end" textLength="19.9" lengthAdjust="spacingAndGlyphs">5 V</text>
<rect x="1721.1" y="260.0" width="25.9" height="15" fill="#000"/>
<text x="1745.8" y="272.0" font-size="12.6" fill="#ecea22" text-anchor="end" textLength="19.9" lengthAdjust="spacingAndGlyphs">0 V</text>
<rect x="1721.1" y="308.0" width="25.9" height="15" fill="#000"/>
<text x="1745.8" y="320.0" font-size="12.6" fill="#8cc83c" text-anchor="end" textLength="19.9" lengthAdjust="spacingAndGlyphs">1 V</text>
<rect x="1695.4" y="331.0" width="51.6" height="15" fill="#000"/>
<text x="1745.8" y="343.0" font-size="12.6" fill="#8cc83c" text-anchor="end" textLength="45.6" lengthAdjust="spacingAndGlyphs">800 mV</text>
<rect x="1695.4" y="354.0" width="51.6" height="15" fill="#000"/>
<text x="1745.8" y="366.0" font-size="12.6" fill="#8cc83c" text-anchor="end" textLength="45.6" lengthAdjust="spacingAndGlyphs">600 mV</text>
<rect x="1695.4" y="378.0" width="51.6" height="15" fill="#000"/>
<text x="1745.8" y="390.0" font-size="12.6" fill="#8cc83c" text-anchor="end" textLength="45.6" lengthAdjust="spacingAndGlyphs">400 mV</text>
<rect x="1695.4" y="401.0" width="51.6" height="15" fill="#000"/>
<text x="1745.8" y="413.0" font-size="12.6" fill="#8cc83c" text-anchor="end" textLength="45.6" lengthAdjust="spacingAndGlyphs">200 mV</text>
<rect x="1721.1" y="424.0" width="25.9" height="15" fill="#000"/>
<text x="1745.8" y="436.0" font-size="12.6" fill="#8cc83c" text-anchor="end" textLength="19.9" lengthAdjust="spacingAndGlyphs">0 V</text>
<rect x="1691.0" y="447.0" width="56.0" height="15" fill="#000"/>
<text x="1745.8" y="459.0" font-size="12.6" fill="#8cc83c" text-anchor="end" textLength="50.0" lengthAdjust="spacingAndGlyphs">-200 mV</text>
<rect x="1691.0" y="471.0" width="56.0" height="15" fill="#000"/>
<text x="1745.8" y="483.0" font-size="12.6" fill="#8cc83c" text-anchor="end" textLength="50.0" lengthAdjust="spacingAndGlyphs">-400 mV</text>
<rect x="1691.0" y="494.0" width="56.0" height="15" fill="#000"/>
<text x="1745.8" y="506.0" font-size="12.6" fill="#8cc83c" text-anchor="end" textLength="50.0" lengthAdjust="spacingAndGlyphs">-600 mV</text>
<rect x="1670.4" y="542.0" width="76.6" height="15" fill="#000"/>
<text x="1745.8" y="554.0" font-size="12.6" fill="#ee8c2a" text-anchor="end" textLength="70.6" lengthAdjust="spacingAndGlyphs">597.509 mT</text>
<rect x="1670.4" y="565.0" width="76.6" height="15" fill="#000"/>
<text x="1745.8" y="577.0" font-size="12.6" fill="#ee8c2a" text-anchor="end" textLength="70.6" lengthAdjust="spacingAndGlyphs">522.820 mT</text>
<rect x="1670.4" y="589.0" width="76.6" height="15" fill="#000"/>
<text x="1745.8" y="601.0" font-size="12.6" fill="#ee8c2a" text-anchor="end" textLength="70.6" lengthAdjust="spacingAndGlyphs">448.131 mT</text>
<rect x="1670.4" y="612.0" width="76.6" height="15" fill="#000"/>
<text x="1745.8" y="624.0" font-size="12.6" fill="#ee8c2a" text-anchor="end" textLength="70.6" lengthAdjust="spacingAndGlyphs">373.443 mT</text>
<rect x="1670.4" y="635.0" width="76.6" height="15" fill="#000"/>
<text x="1745.8" y="647.0" font-size="12.6" fill="#ee8c2a" text-anchor="end" textLength="70.6" lengthAdjust="spacingAndGlyphs">298.754 mT</text>
<rect x="1670.4" y="658.0" width="76.6" height="15" fill="#000"/>
<text x="1745.8" y="670.0" font-size="12.6" fill="#ee8c2a" text-anchor="end" textLength="70.6" lengthAdjust="spacingAndGlyphs">224.066 mT</text>
<rect x="1670.4" y="682.0" width="76.6" height="15" fill="#000"/>
<text x="1745.8" y="694.0" font-size="12.6" fill="#ee8c2a" text-anchor="end" textLength="70.6" lengthAdjust="spacingAndGlyphs">149.377 mT</text>
<rect x="1677.8" y="705.0" width="69.2" height="15" fill="#000"/>
<text x="1745.8" y="717.0" font-size="12.6" fill="#ee8c2a" text-anchor="end" textLength="63.2" lengthAdjust="spacingAndGlyphs">74.689 mT</text>
<rect x="1722.1" y="728.0" width="24.9" height="15" fill="#000"/>
<text x="1745.8" y="740.0" font-size="12.6" fill="#ee8c2a" text-anchor="end" textLength="18.9" lengthAdjust="spacingAndGlyphs">0 T</text>
<rect x="1666.7" y="772.0" width="80.3" height="15" fill="#000"/>
<text x="1745.8" y="784.0" font-size="12.6" fill="#8a42b0" text-anchor="end" textLength="74.3" lengthAdjust="spacingAndGlyphs">7.319995 kA</text>
<rect x="1666.7" y="795.0" width="80.3" height="15" fill="#000"/>
<text x="1745.8" y="807.0" font-size="12.6" fill="#8a42b0" text-anchor="end" textLength="74.3" lengthAdjust="spacingAndGlyphs">6.404995 kA</text>
<rect x="1666.7" y="818.0" width="80.3" height="15" fill="#000"/>
<text x="1745.8" y="830.0" font-size="12.6" fill="#8a42b0" text-anchor="end" textLength="74.3" lengthAdjust="spacingAndGlyphs">5.489996 kA</text>
<rect x="1666.7" y="842.0" width="80.3" height="15" fill="#000"/>
<text x="1745.8" y="854.0" font-size="12.6" fill="#8a42b0" text-anchor="end" textLength="74.3" lengthAdjust="spacingAndGlyphs">4.574997 kA</text>
<rect x="1666.7" y="865.0" width="80.3" height="15" fill="#000"/>
<text x="1745.8" y="877.0" font-size="12.6" fill="#8a42b0" text-anchor="end" textLength="74.3" lengthAdjust="spacingAndGlyphs">3.659997 kA</text>
<rect x="1666.7" y="888.0" width="80.3" height="15" fill="#000"/>
<text x="1745.8" y="900.0" font-size="12.6" fill="#8a42b0" text-anchor="end" textLength="74.3" lengthAdjust="spacingAndGlyphs">2.744998 kA</text>
<rect x="1666.7" y="911.0" width="80.3" height="15" fill="#000"/>
<text x="1745.8" y="923.0" font-size="12.6" fill="#8a42b0" text-anchor="end" textLength="74.3" lengthAdjust="spacingAndGlyphs">1.829999 kA</text>
<rect x="1707.2" y="935.0" width="39.8" height="15" fill="#000"/>
<text x="1745.8" y="947.0" font-size="12.6" fill="#8a42b0" text-anchor="end" textLength="33.8" lengthAdjust="spacingAndGlyphs">915 A</text>
<rect x="1721.9" y="958.0" width="25.1" height="15" fill="#000"/>
<text x="1745.8" y="970.0" font-size="12.6" fill="#8a42b0" text-anchor="end" textLength="19.1" lengthAdjust="spacingAndGlyphs">0 A</text>
<rect x="45.3" y="976" width="21.4" height="13" fill="#000"/>
<text x="56.0" y="986.7" font-size="12.2" fill="#bdbdbd" text-anchor="middle" textLength="17.4" lengthAdjust="spacingAndGlyphs">0 s</text>
<rect x="214.8" y="976" width="32.3" height="13" fill="#000"/>
<text x="230.9" y="986.7" font-size="12.2" fill="#bdbdbd" text-anchor="middle" textLength="28.3" lengthAdjust="spacingAndGlyphs">4 ms</text>
<rect x="389.7" y="976" width="32.3" height="13" fill="#000"/>
<text x="405.8" y="986.7" font-size="12.2" fill="#bdbdbd" text-anchor="middle" textLength="28.3" lengthAdjust="spacingAndGlyphs">8 ms</text>
<rect x="560.9" y="976" width="39.5" height="13" fill="#000"/>
<text x="580.7" y="986.7" font-size="12.2" fill="#bdbdbd" text-anchor="middle" textLength="35.5" lengthAdjust="spacingAndGlyphs">12 ms</text>
<rect x="735.8" y="976" width="39.5" height="13" fill="#000"/>
<text x="755.6" y="986.7" font-size="12.2" fill="#bdbdbd" text-anchor="middle" textLength="35.5" lengthAdjust="spacingAndGlyphs">16 ms</text>
<rect x="910.7" y="976" width="39.5" height="13" fill="#000"/>
<text x="930.5" y="986.7" font-size="12.2" fill="#bdbdbd" text-anchor="middle" textLength="35.5" lengthAdjust="spacingAndGlyphs">20 ms</text>
<rect x="1085.6" y="976" width="39.5" height="13" fill="#000"/>
<text x="1105.4" y="986.7" font-size="12.2" fill="#bdbdbd" text-anchor="middle" textLength="35.5" lengthAdjust="spacingAndGlyphs">24 ms</text>
<rect x="1260.5" y="976" width="39.5" height="13" fill="#000"/>
<text x="1280.3" y="986.7" font-size="12.2" fill="#bdbdbd" text-anchor="middle" textLength="35.5" lengthAdjust="spacingAndGlyphs">28 ms</text>
<rect x="1435.4" y="976" width="39.5" height="13" fill="#000"/>
<text x="1455.2" y="986.7" font-size="12.2" fill="#bdbdbd" text-anchor="middle" textLength="35.5" lengthAdjust="spacingAndGlyphs">32 ms</text>
<rect x="1610.3" y="976" width="39.5" height="13" fill="#000"/>
<text x="1630.1" y="986.7" font-size="12.2" fill="#bdbdbd" text-anchor="middle" textLength="35.5" lengthAdjust="spacingAndGlyphs">36 ms</text>
<line x1="55.5" y1="95" x2="55.5" y2="290" stroke="#c8c8c8" stroke-width="1.2" stroke-dasharray="5 5" stroke-dashoffset="0"/>
<line x1="55.5" y1="292" x2="55.5" y2="524" stroke="#c8c8c8" stroke-width="1.2" stroke-dasharray="5 5" stroke-dashoffset="3"/>
<line x1="55.5" y1="526" x2="55.5" y2="758" stroke="#c8c8c8" stroke-width="1.2" stroke-dasharray="5 5" stroke-dashoffset="3"/>
<line x1="55.5" y1="760" x2="55.5" y2="992" stroke="#c8c8c8" stroke-width="1.2" stroke-dasharray="5 5" stroke-dashoffset="7"/>
<path d="M1710.5 65.3 L1741 65.3 Q1744 65.3 1744 68.3 L1744 96 Q1744 98.8 1742 97 Z" fill="#575757"/>
<circle cx="1737" cy="71.8" r="4" fill="none" stroke="#9c9c9c" stroke-width="1.7"/>
<line x1="1734" y1="74.8" x2="1728" y2="80.6" stroke="#9c9c9c" stroke-width="2.7" stroke-linecap="round"/>
<path d="M9 161.5 L76.5 161.5 L83.5 174.5 L76.5 187.5 L9 187.5 Q6.5 187.5 6.5 185.0 L6.5 164.0 Q6.5 161.5 9 161.5 Z" fill="#1e1c08" stroke="#ecea22" stroke-width="2"/>
<line x1="32.8" y1="161.5" x2="32.8" y2="187.5" stroke="#ecea22" stroke-width="2"/>
<path d="M9 395.5 L76.5 395.5 L83.5 408.5 L76.5 421.5 L9 421.5 Q6.5 421.5 6.5 419.0 L6.5 398.0 Q6.5 395.5 9 395.5 Z" fill="#121a08" stroke="#8cd23c" stroke-width="2"/>
<line x1="32.8" y1="395.5" x2="32.8" y2="421.5" stroke="#8cd23c" stroke-width="2"/>
<text x="10.90" y="177.8" font-size="12.5" font-weight="normal" fill="#ecea22" stroke="#ecea22" stroke-width="0.2" textLength="17.00" lengthAdjust="spacingAndGlyphs">C 1</text>
<text x="45.30" y="177.8" font-size="12.5" font-weight="normal" fill="#ecea22" stroke="#ecea22" stroke-width="0.2" textLength="24.33" lengthAdjust="spacingAndGlyphs">20 V</text>
<text x="10.90" y="412" font-size="12.5" font-weight="normal" fill="#8cd23c" stroke="#8cd23c" stroke-width="0.2" textLength="17.51" lengthAdjust="spacingAndGlyphs">C 4</text>
<text x="35.50" y="412" font-size="12.5" font-weight="normal" fill="#8cd23c" stroke="#8cd23c" stroke-width="0.2" textLength="42.49" lengthAdjust="spacingAndGlyphs">200 mV</text>
<text x="100.86" y="178.6" font-size="17.5" font-weight="normal" fill="#ecea22" stroke="#ecea22" stroke-width="0" textLength="98.60" lengthAdjust="spacingAndGlyphs">U_loop,coil</text>
<text x="100.88" y="412.8" font-size="17.5" font-weight="normal" fill="#8cd23c" stroke="#8cd23c" stroke-width="0" textLength="87.37" lengthAdjust="spacingAndGlyphs">U_Photod</text>
<path d="M9 722.8 L29.5 722.8 L41.8 735.2 L29.5 747.5 L9 747.5 Q6.8 747.5 6.8 745.3 L6.8 725 Q6.8 722.8 9 722.8 Z" fill="#1e1408" stroke="#ee8c2a" stroke-width="1.3"/>
<text x="12.67" y="737.8" font-size="11.5" font-weight="normal" fill="#ee8c2a" stroke="#ee8c2a" stroke-width="0.2" textLength="20.72" lengthAdjust="spacingAndGlyphs">M 1</text>
<text x="52.90" y="741.8" font-size="25" font-weight="normal" fill="#ee8c2a" stroke="#ee8c2a" stroke-width="0" textLength="39.41" lengthAdjust="spacingAndGlyphs">B_t</text>
<path d="M9.5 952.5 L30 952.5 L42.5 965.3 L30 978 L9.5 978 Q6 978 6 974.5 L6 956 Q6 952.5 9.5 952.5 Z" fill="#762a98"/>
<text x="12.38" y="967.75" font-size="11.5" font-weight="normal" fill="#ffffff" stroke="#ffffff" stroke-width="0.2" textLength="21.57" lengthAdjust="spacingAndGlyphs">M 2</text>
<text x="53.1" y="969.5" font-size="17.5" fill="#7a2c9e" textLength="26.4" lengthAdjust="spacingAndGlyphs">I_p</text>
<path d="M44.8 57.8 L65.2 57.8 L55.2 67.6 Z" fill="#f29028"/>
<path d="M46.2 69.1 H63.8 V87.6 H58.6 L55.2 94.5 L51.8 87.6 H46.2 Z" fill="#000" stroke="#f29028" stroke-width="2.5"/>
<text x="55.1" y="84" font-size="15" fill="#f29028" text-anchor="middle">T</text>
<path d="M3 265h52v1h-52zM55 256h1v10h-1zM56 261h1v7h-1zM57 264h1v2h-1zM58 264h2v1h-2zM60 264h1v2h-1zM61 265h21v1h-21zM82 258h1v11h-1zM83 257h1v2h-1zM84 256h1v2h-1zM85 255h1v2h-1zM86 254h1v2h-1zM87 254h1v1h-1zM88 253h2v1h-2zM90 252h2v1h-2zM92 251h1v1h-1zM93 250h1v2h-1zM94 250h1v1h-1zM95 249h1v1h-1zM96 248h1v2h-1zM97 248h1v1h-1zM98 247h1v2h-1zM99 247h1v1h-1zM100 246h1v2h-1zM101 245h1v2h-1zM102 245h1v1h-1zM103 244h1v2h-1zM104 243h1v2h-1zM105 243h1v1h-1zM106 242h1v2h-1zM107 241h1v2h-1zM108 241h2v1h-2zM110 240h1v2h-1zM111 240h2v1h-2zM113 239h2v1h-2zM115 238h1v2h-1zM116 238h2v1h-2zM118 237h1v2h-1zM119 237h2v1h-2zM121 236h1v2h-1zM122 236h2v1h-2zM124 235h3v1h-3zM127 234h2v1h-2zM129 233h1v2h-1zM130 233h2v1h-2zM132 232h1v2h-1zM133 232h4v1h-4zM137 231h3v1h-3zM140 230h1v2h-1zM141 230h3v1h-3zM144 229h1v2h-1zM145 229h3v1h-3zM148 228h1v2h-1zM149 228h3v1h-3zM152 227h1v2h-1zM153 227h4v1h-4zM157 226h1v2h-1zM158 226h5v1h-5zM163 225h1v2h-1zM164 225h5v1h-5zM169 224h1v2h-1zM170 224h5v1h-5zM175 223h1v2h-1zM176 223h5v1h-5zM181 222h1v2h-1zM182 222h7v1h-7zM189 221h1v2h-1zM190 221h16v1h-16zM206 222h1v1h-1zM207 222h1v2h-1zM208 223h1v2h-1zM209 224h1v1h-1zM210 224h1v2h-1zM211 225h1v2h-1zM212 226h1v1h-1zM213 226h1v2h-1zM214 227h2v1h-2zM216 228h4v1h-4zM220 228h1v2h-1zM221 229h4v1h-4zM225 229h1v2h-1zM226 230h6v1h-6zM232 230h1v2h-1zM233 231h6v1h-6zM239 231h1v2h-1zM240 232h4v1h-4zM244 232h1v2h-1zM245 233h2v1h-2zM247 233h1v2h-1zM248 234h3v1h-3zM251 234h1v2h-1zM252 235h2v1h-2zM254 235h1v2h-1zM255 236h3v1h-3zM258 236h1v2h-1zM259 237h3v1h-3zM262 238h3v1h-3zM265 238h1v2h-1zM266 239h3v1h-3zM269 239h1v2h-1zM270 240h21v1h-21zM291 240h2v2h-2zM293 240h1v1h-1zM294 240h2v2h-2zM296 240h9v1h-9zM305 240h1v2h-1zM306 240h11v1h-11zM317 240h1v2h-1zM318 240h5v1h-5zM323 238h1v2h-1zM324 237h1v2h-1zM325 237h2v1h-2zM327 237h1v2h-1zM328 238h1v1h-1zM329 238h1v2h-1zM330 239h9v1h-9zM339 239h3v2h-3zM342 240h3v1h-3zM345 240h2v2h-2zM347 240h1v1h-1zM348 240h1v2h-1zM349 240h5v1h-5zM354 240h1v2h-1zM355 241h4v1h-4zM359 240h1v2h-1zM360 240h1v1h-1zM361 240h1v3h-1zM362 242h1v2h-1zM363 240h1v3h-1zM364 241h2v1h-2zM366 242h1v1h-1zM367 241h1v2h-1zM368 241h5v1h-5zM373 241h1v2h-1zM374 242h2v1h-2zM376 241h1v2h-1zM377 241h6v1h-6zM383 241h1v2h-1zM384 242h2v1h-2zM386 242h1v2h-1zM387 243h1v1h-1zM388 242h1v2h-1zM389 242h3v1h-3zM392 242h1v2h-1zM393 243h1v1h-1zM394 242h7v1h-7zM401 242h3v2h-3zM404 243h1v1h-1zM405 242h1v2h-1zM406 242h2v1h-2zM408 241h3v2h-3zM411 241h1v1h-1zM412 241h1v2h-1zM413 241h4v1h-4zM417 241h1v2h-1zM418 241h1v1h-1zM419 241h1v2h-1zM420 242h6v1h-6zM426 241h1v1h-1zM427 242h1v1h-1zM428 241h1v2h-1zM429 242h1v1h-1zM430 241h1v2h-1zM431 241h1v1h-1zM432 241h1v2h-1zM433 242h1v3h-1zM434 241h1v2h-1zM435 241h1v1h-1zM436 240h2v2h-2zM438 241h5v1h-5zM443 240h1v2h-1zM444 240h1v1h-1zM445 240h1v2h-1zM446 241h1v1h-1zM447 242h1v2h-1zM448 240h1v3h-1zM449 240h1v2h-1zM450 241h11v1h-11zM461 240h1v1h-1zM462 239h1v2h-1zM463 239h4v1h-4zM467 238h2v2h-2zM469 239h2v1h-2zM471 238h1v2h-1zM472 236h1v3h-1zM473 236h1v4h-1zM474 239h2v1h-2zM476 239h1v2h-1zM477 239h3v1h-3zM480 239h1v2h-1zM481 240h2v1h-2zM483 239h1v2h-1zM484 239h3v1h-3zM487 238h1v2h-1zM488 238h1v1h-1zM489 239h2v1h-2zM491 238h1v2h-1zM492 238h1v3h-1zM493 239h1v2h-1zM494 239h3v1h-3zM497 239h1v2h-1zM498 239h4v1h-4zM502 238h2v2h-2zM504 239h2v1h-2zM506 238h1v3h-1zM507 239h1v2h-1zM508 238h1v1h-1zM509 237h1v4h-1zM510 238h1v3h-1zM511 237h2v1h-2zM513 237h2v2h-2zM515 237h1v1h-1zM516 237h1v2h-1zM517 238h1v2h-1zM518 237h1v4h-1zM519 237h1v1h-1zM520 237h1v2h-1zM521 238h1v1h-1zM522 236h2v3h-2zM524 238h2v1h-2zM526 237h1v2h-1zM527 238h1v1h-1zM528 238h1v2h-1zM529 237h1v4h-1zM530 236h1v2h-1zM531 238h1v1h-1zM532 237h1v2h-1zM533 237h1v1h-1zM534 237h2v2h-2zM536 237h2v1h-2zM538 236h1v2h-1zM539 236h1v1h-1zM540 235h2v2h-2zM542 237h1v1h-1zM543 236h1v2h-1zM544 235h1v2h-1zM545 235h1v1h-1zM546 236h1v1h-1zM547 236h3v2h-3zM550 237h2v1h-2zM552 237h3v2h-3zM555 238h2v1h-2zM557 237h1v2h-1zM558 237h1v1h-1zM559 237h1v2h-1zM560 238h4v1h-4zM564 238h1v2h-1zM565 239h1v1h-1zM566 238h1v2h-1zM567 238h1v1h-1zM568 238h1v2h-1zM569 239h2v2h-2zM571 239h6v1h-6zM577 238h3v2h-3zM580 236h2v4h-2zM582 239h1v1h-1zM583 238h1v2h-1zM584 238h7v1h-7zM591 238h1v2h-1zM592 238h3v1h-3zM595 238h1v2h-1zM596 238h2v1h-2zM598 238h2v2h-2zM600 238h1v1h-1zM601 237h1v2h-1zM602 237h1v3h-1zM603 239h2v1h-2zM605 239h2v2h-2zM607 239h1v1h-1zM608 240h1v1h-1zM609 239h1v2h-1zM610 239h1v1h-1zM611 236h1v4h-1zM612 236h1v3h-1zM613 238h2v2h-2zM615 238h1v3h-1zM616 239h1v2h-1zM617 239h1v1h-1zM618 238h1v2h-1zM619 239h1v1h-1zM620 238h1v2h-1zM621 238h1v1h-1zM622 238h2v2h-2zM624 238h1v1h-1zM625 238h2v2h-2zM627 238h1v1h-1zM628 239h7v1h-7zM635 239h2v2h-2zM637 237h2v3h-2zM639 239h2v1h-2zM641 238h1v2h-1zM642 238h1v1h-1zM643 238h1v2h-1zM644 239h1v1h-1zM645 239h1v2h-1zM646 239h3v1h-3zM649 238h2v2h-2zM651 238h3v1h-3zM654 238h1v2h-1zM655 239h2v1h-2zM657 239h2v2h-2zM659 239h1v1h-1zM660 238h1v3h-1zM661 238h1v2h-1zM662 239h1v1h-1zM663 239h1v3h-1zM664 240h1v2h-1zM665 240h1v1h-1zM666 239h1v1h-1zM667 239h2v2h-2zM669 239h5v1h-5zM674 238h1v2h-1zM675 238h1v1h-1zM676 239h3v1h-3zM679 239h1v2h-1zM680 239h2v1h-2zM682 239h1v2h-1zM683 240h6v1h-6zM689 240h1v2h-1zM690 241h1v1h-1zM691 240h4v2h-4zM695 241h2v1h-2zM697 240h1v2h-1zM698 241h2v1h-2zM700 241h1v2h-1zM701 242h1v1h-1zM702 241h1v2h-1zM703 240h1v2h-1zM704 240h1v1h-1zM705 240h2v2h-2zM707 240h2v1h-2zM709 239h1v2h-1zM710 240h3v1h-3zM713 240h2v2h-2zM715 240h2v1h-2zM717 240h3v2h-3zM720 241h6v1h-6zM726 240h1v2h-1zM727 240h2v1h-2zM729 239h1v2h-1zM730 239h3v1h-3zM733 239h1v2h-1zM734 239h2v3h-2zM736 238h1v2h-1zM737 239h1v1h-1zM738 238h1v2h-1zM739 238h1v3h-1zM740 239h2v2h-2zM742 240h1v1h-1zM743 238h1v4h-1zM744 237h1v4h-1zM745 240h1v1h-1zM746 239h2v2h-2zM748 240h2v1h-2zM750 240h1v2h-1zM751 240h3v1h-3zM754 240h1v2h-1zM755 241h6v1h-6zM761 240h1v2h-1zM762 240h1v1h-1zM763 241h1v1h-1zM764 241h1v2h-1zM765 242h1v2h-1zM766 243h1v2h-1zM767 242h2v2h-2zM769 241h1v1h-1zM770 241h1v2h-1zM771 242h1v2h-1zM772 242h5v1h-5zM777 241h2v1h-2zM779 242h3v1h-3zM782 243h1v1h-1zM783 242h2v1h-2zM785 243h2v1h-2zM787 242h1v2h-1zM788 243h5v1h-5zM793 243h1v2h-1zM794 245h1v1h-1zM795 244h1v2h-1zM796 244h1v1h-1zM797 244h1v2h-1zM798 245h1v2h-1zM799 244h1v2h-1zM800 244h2v1h-2zM802 242h1v3h-1zM803 243h1v1h-1zM804 243h2v2h-2zM806 243h10v1h-10zM816 243h1v2h-1zM817 243h1v1h-1zM818 244h2v1h-2zM820 243h2v2h-2zM822 243h1v1h-1zM823 241h1v2h-1zM824 242h1v3h-1zM825 244h3v1h-3zM828 244h1v2h-1zM829 244h2v1h-2zM831 244h2v2h-2zM833 244h4v1h-4zM837 245h1v2h-1zM838 243h1v3h-1zM839 243h2v1h-2zM841 244h1v1h-1zM842 243h1v2h-1zM843 243h2v1h-2zM845 243h1v2h-1zM846 244h1v2h-1zM847 244h3v1h-3zM850 243h1v2h-1zM851 243h1v1h-1zM852 243h1v2h-1zM853 244h2v1h-2zM855 245h1v1h-1zM856 244h1v2h-1zM857 244h4v1h-4zM861 244h1v2h-1zM862 244h3v1h-3zM865 242h1v2h-1zM866 243h1v2h-1zM867 244h1v1h-1zM868 243h1v2h-1zM869 243h1v1h-1zM870 243h1v2h-1zM871 244h7v1h-7zM878 244h1v2h-1zM879 245h2v1h-2zM881 244h5v1h-5zM886 243h2v2h-2zM888 244h2v1h-2zM890 243h1v2h-1zM891 243h2v1h-2zM893 242h1v2h-1zM894 242h2v1h-2zM896 243h1v2h-1zM897 242h1v2h-1zM898 241h1v2h-1zM899 242h2v2h-2zM901 241h3v1h-3zM904 241h1v2h-1zM905 242h1v1h-1zM906 241h1v2h-1zM907 240h1v2h-1zM908 241h1v2h-1zM909 240h1v2h-1zM910 241h1v2h-1zM911 242h2v1h-2zM913 241h1v2h-1zM914 242h1v1h-1zM915 241h1v2h-1zM916 239h1v3h-1zM917 240h1v2h-1zM918 241h1v1h-1zM919 241h1v2h-1zM920 240h1v2h-1zM921 240h2v1h-2zM923 241h2v1h-2zM925 240h1v2h-1zM926 240h4v1h-4zM930 240h1v2h-1zM931 241h1v1h-1zM932 240h1v1h-1zM933 240h1v2h-1zM934 238h1v3h-1zM935 239h2v2h-2zM937 240h4v1h-4zM941 239h1v2h-1zM942 240h1v12h-1zM943 224h1v40h-1zM944 204h1v21h-1zM945 180h1v25h-1zM946 170h1v11h-1zM947 164h1v7h-1zM948 169h1v2h-1zM949 170h1v2h-1zM950 171h1v1h-1zM951 171h1v6h-1zM952 166h1v11h-1zM953 161h1v6h-1zM954 163h1v4h-1zM955 164h1v3h-1zM956 163h1v2h-1zM957 162h1v2h-1zM958 160h1v2h-1zM959 160h2v11h-2zM961 153h1v8h-1zM962 147h1v7h-1zM963 141h1v7h-1zM964 140h1v2h-1zM965 139h1v2h-1zM966 137h1v2h-1zM967 136h2v3h-2zM969 133h1v4h-1zM970 131h1v2h-1zM971 131h1v1h-1zM972 128h1v4h-1zM973 123h1v5h-1zM974 119h1v5h-1zM975 116h1v4h-1zM976 111h1v5h-1zM977 105h1v7h-1zM978 97h1v9h-1zM979 97h1v6h-1zM980 103h2v1h-2zM982 103h2v2h-2zM984 103h1v1h-1zM985 102h1v1h-1zM986 102h1v2h-1zM987 103h1v3h-1zM988 106h1v3h-1zM989 108h1v3h-1zM990 110h1v4h-1zM991 113h1v2h-1zM992 115h1v3h-1zM993 118h1v4h-1zM994 121h1v3h-1zM995 124h1v4h-1zM996 127h1v3h-1zM997 129h1v1h-1zM998 129h1v5h-1zM999 134h1v3h-1zM1000 136h1v4h-1zM1001 139h1v4h-1zM1002 142h1v4h-1zM1003 145h1v4h-1zM1004 148h1v4h-1zM1005 151h1v4h-1zM1006 154h1v4h-1zM1007 158h1v4h-1zM1008 161h1v4h-1zM1009 164h1v4h-1zM1010 167h1v4h-1zM1011 170h1v4h-1zM1012 173h1v4h-1zM1013 176h1v4h-1zM1014 179h1v4h-1zM1015 182h1v4h-1zM1016 185h1v4h-1zM1017 188h1v4h-1zM1018 191h1v4h-1zM1019 194h1v4h-1zM1020 197h1v4h-1zM1021 200h1v3h-1zM1022 203h1v3h-1zM1023 205h1v3h-1zM1024 207h1v3h-1zM1025 209h1v3h-1zM1026 212h1v3h-1zM1027 214h1v3h-1zM1028 216h1v3h-1zM1029 218h1v3h-1zM1030 220h1v2h-1zM1031 222h1v2h-1zM1032 223h1v2h-1zM1033 225h1v2h-1zM1034 226h1v2h-1zM1035 227h1v3h-1zM1036 229h1v2h-1zM1037 230h1v2h-1zM1038 232h1v2h-1zM1039 233h1v2h-1zM1040 234h1v2h-1zM1041 235h1v2h-1zM1042 236h1v2h-1zM1043 237h1v2h-1zM1044 238h1v2h-1zM1045 239h1v2h-1zM1046 240h1v2h-1zM1047 241h1v2h-1zM1048 242h1v2h-1zM1049 243h1v2h-1zM1050 244h1v2h-1zM1051 245h1v1h-1zM1052 245h1v2h-1zM1053 246h1v1h-1zM1054 246h1v2h-1zM1055 247h1v1h-1zM1056 248h1v1h-1zM1057 248h1v2h-1zM1058 249h1v1h-1zM1059 249h1v2h-1zM1060 250h2v1h-2zM1062 250h1v2h-1zM1063 251h2v1h-2zM1065 251h1v2h-1zM1066 252h3v1h-3zM1069 253h9v1h-9zM1078 253h1v2h-1zM1079 254h11v1h-11zM1090 255h30v1h-30zM1120 256h98v1h-98zM1218 257h82v1h-82zM1300 257h1v2h-1zM1301 258h70v1h-70zM1371 258h1v4h-1zM1372 262h68v1h-68zM1440 261h1v2h-1zM1441 260h1v2h-1zM1442 260h173v1h-173zM1615 260h1v2h-1zM1616 261h136v1h-136z" fill="#f4ee12" shape-rendering="crispEdges"/>
<path d="M3 429h12v1h-12zM15 429h1v2h-1zM16 430h9v1h-9zM25 429h5v1h-5zM30 430h5v1h-5zM35 429h2v2h-2zM37 430h3v1h-3zM40 429h61v1h-61zM101 430h2v1h-2zM103 429h26v1h-26zM129 429h1v2h-1zM130 430h3v1h-3zM133 429h1v2h-1zM134 429h4v1h-4zM138 429h1v2h-1zM139 429h55v1h-55zM194 429h2v2h-2zM196 429h14v1h-14zM210 428h1v2h-1zM211 428h1v1h-1zM212 427h1v2h-1zM213 427h2v1h-2zM215 426h1v2h-1zM216 426h2v1h-2zM218 425h2v1h-2zM220 424h2v1h-2zM222 423h1v2h-1zM223 423h1v1h-1zM224 422h1v2h-1zM225 422h1v1h-1zM226 421h1v2h-1zM227 421h1v1h-1zM228 420h1v2h-1zM229 420h1v1h-1zM230 419h1v2h-1zM231 419h1v1h-1zM232 418h2v1h-2zM234 417h2v1h-2zM236 416h1v1h-1zM237 415h1v2h-1zM238 415h1v1h-1zM239 414h1v2h-1zM240 414h1v1h-1zM241 413h1v2h-1zM242 413h1v1h-1zM243 412h1v2h-1zM244 412h1v1h-1zM245 411h1v2h-1zM246 411h1v1h-1zM247 410h1v2h-1zM248 410h1v1h-1zM249 409h2v1h-2zM251 408h1v2h-1zM252 408h2v1h-2zM254 407h1v2h-1zM255 407h2v1h-2zM257 406h1v2h-1zM258 406h1v1h-1zM259 405h1v2h-1zM260 405h1v1h-1zM261 404h2v2h-2zM263 405h2v1h-2zM265 404h6v1h-6zM271 403h20v1h-20zM291 403h1v2h-1zM292 404h15v1h-15zM307 404h1v2h-1zM308 405h8v1h-8zM316 405h1v2h-1zM317 406h18v1h-18zM335 407h10v1h-10zM345 406h1v2h-1zM346 406h1v1h-1zM347 406h1v2h-1zM348 407h4v1h-4zM352 406h1v2h-1zM353 406h1v1h-1zM354 406h1v2h-1zM355 407h44v1h-44zM399 408h1v1h-1zM400 407h1v2h-1zM401 407h3v1h-3zM404 407h1v2h-1zM405 408h15v1h-15zM420 408h1v2h-1zM421 409h19v1h-19zM440 408h10v1h-10zM450 408h1v2h-1zM451 409h3v1h-3zM454 408h15v1h-15zM469 407h1v2h-1zM470 407h5v1h-5zM475 407h2v2h-2zM477 407h25v1h-25zM502 406h1v1h-1zM503 406h1v2h-1zM504 407h14v1h-14zM518 406h1v2h-1zM519 406h4v1h-4zM523 406h1v2h-1zM524 407h3v1h-3zM527 406h4v1h-4zM531 406h1v2h-1zM532 407h2v1h-2zM534 406h1v2h-1zM535 406h19v1h-19zM554 407h5v1h-5zM559 406h22v1h-22zM581 407h4v1h-4zM585 406h11v1h-11zM596 406h1v2h-1zM597 407h4v1h-4zM601 406h6v1h-6zM607 407h1v1h-1zM608 406h1v2h-1zM609 406h14v1h-14zM623 406h1v2h-1zM624 406h9v1h-9zM633 407h10v1h-10zM643 406h4v1h-4zM647 407h39v1h-39zM686 406h2v2h-2zM688 407h6v1h-6zM694 406h1v2h-1zM695 406h2v1h-2zM697 406h1v2h-1zM698 407h5v1h-5zM703 406h1v2h-1zM704 406h2v1h-2zM706 406h1v2h-1zM707 407h23v1h-23zM730 406h1v2h-1zM731 406h1v1h-1zM732 406h1v2h-1zM733 407h25v1h-25zM758 407h1v2h-1zM759 408h12v1h-12zM771 408h1v2h-1zM772 409h4v1h-4zM776 408h1v2h-1zM777 408h4v1h-4zM781 409h2v1h-2zM783 408h1v2h-1zM784 408h2v1h-2zM786 408h1v2h-1zM787 409h1v1h-1zM788 408h1v2h-1zM789 408h13v1h-13zM802 408h1v2h-1zM803 409h1v1h-1zM804 408h1v2h-1zM805 408h13v1h-13zM818 408h1v2h-1zM819 409h7v1h-7zM826 408h7v1h-7zM833 409h2v1h-2zM835 408h8v1h-8zM843 408h1v2h-1zM844 408h12v1h-12zM856 408h1v2h-1zM857 409h3v1h-3zM860 408h1v2h-1zM861 408h2v1h-2zM863 409h7v1h-7zM870 408h1v2h-1zM871 408h7v1h-7zM878 408h1v2h-1zM879 409h6v1h-6zM885 408h1v2h-1zM886 408h23v1h-23zM909 407h1v2h-1zM910 407h32v1h-32zM942 406h1v2h-1zM943 404h1v3h-1zM944 401h1v3h-1zM945 400h1v2h-1zM946 400h1v1h-1zM947 399h1v2h-1zM948 399h2v1h-2zM950 398h6v1h-6zM956 399h1v1h-1zM957 398h17v1h-17zM974 398h1v2h-1zM975 399h2v1h-2zM977 399h1v2h-1zM978 400h2v1h-2zM980 401h4v1h-4zM984 402h2v1h-2zM986 402h1v2h-1zM987 403h1v1h-1zM988 403h1v2h-1zM989 404h1v1h-1zM990 404h1v2h-1zM991 405h1v2h-1zM992 406h1v1h-1zM993 406h1v2h-1zM994 407h1v1h-1zM995 407h1v2h-1zM996 408h1v1h-1zM997 408h1v2h-1zM998 409h1v2h-1zM999 410h1v1h-1zM1000 410h1v2h-1zM1001 411h1v2h-1zM1002 412h1v2h-1zM1003 413h1v1h-1zM1004 413h1v2h-1zM1005 414h2v1h-2zM1007 414h1v2h-1zM1008 415h1v1h-1zM1009 415h1v2h-1zM1010 416h1v1h-1zM1011 417h2v1h-2zM1013 418h3v1h-3zM1016 419h4v1h-4zM1020 419h1v2h-1zM1021 420h3v1h-3zM1024 420h1v2h-1zM1025 421h2v1h-2zM1027 421h1v2h-1zM1028 422h2v1h-2zM1030 422h1v2h-1zM1031 423h8v1h-8zM1039 424h6v1h-6zM1045 424h1v2h-1zM1046 425h6v1h-6zM1052 425h1v2h-1zM1053 426h9v1h-9zM1062 426h1v2h-1zM1063 427h9v1h-9zM1072 427h1v2h-1zM1073 428h15v1h-15zM1088 428h1v2h-1zM1089 429h2v1h-2zM1091 428h1v2h-1zM1092 428h6v1h-6zM1098 428h1v2h-1zM1099 429h4v1h-4zM1103 428h3v1h-3zM1106 428h1v2h-1zM1107 429h5v1h-5zM1112 428h1v2h-1zM1113 428h1v1h-1zM1114 428h1v2h-1zM1115 429h44v1h-44zM1159 428h1v2h-1zM1160 429h130v1h-130zM1290 429h1v2h-1zM1291 430h1v1h-1zM1292 429h212v1h-212zM1504 430h1v1h-1zM1505 429h1v2h-1zM1506 429h22v1h-22zM1528 429h2v2h-2zM1530 429h5v1h-5zM1535 429h1v2h-1zM1536 430h2v1h-2zM1538 429h5v1h-5zM1543 430h4v1h-4zM1547 429h13v1h-13zM1560 429h1v2h-1zM1561 430h1v1h-1zM1562 429h1v2h-1zM1563 429h16v1h-16zM1579 429h2v2h-2zM1581 429h3v1h-3zM1584 429h1v2h-1zM1585 430h1v1h-1zM1586 429h1v2h-1zM1587 429h4v1h-4zM1591 429h1v2h-1zM1592 429h11v1h-11zM1603 429h1v2h-1zM1604 429h7v1h-7zM1611 429h1v2h-1zM1612 430h2v1h-2zM1614 429h1v2h-1zM1615 429h18v1h-18zM1633 430h7v1h-7zM1640 429h1v2h-1zM1641 429h2v1h-2zM1643 429h1v2h-1zM1644 430h3v1h-3zM1647 429h1v2h-1zM1648 429h5v1h-5zM1653 429h1v2h-1zM1654 430h2v1h-2zM1656 429h1v2h-1zM1657 429h7v1h-7zM1664 429h1v2h-1zM1665 430h4v1h-4zM1669 429h6v1h-6zM1675 430h18v1h-18zM1693 429h6v1h-6zM1699 429h1v2h-1zM1700 430h3v1h-3zM1703 429h1v2h-1zM1704 429h13v1h-13zM1717 429h2v2h-2zM1719 429h10v1h-10zM1729 430h3v1h-3zM1732 429h1v1h-1zM1733 429h1v2h-1zM1734 430h9v1h-9zM1743 429h1v2h-1zM1744 429h5v1h-5zM1749 429h1v2h-1zM1750 430h2v1h-2z" fill="#8ad23a" shape-rendering="crispEdges"/>
<path d="M42 734h17v1h-17zM59 733h1v2h-1zM60 733h1v1h-1zM61 732h1v2h-1zM62 732h1v1h-1zM63 731h2v1h-2zM65 730h1v2h-1zM66 730h2v1h-2zM68 729h1v2h-1zM69 729h3v1h-3zM72 728h1v2h-1zM73 728h3v1h-3zM76 727h1v2h-1zM77 727h3v1h-3zM80 726h1v2h-1zM81 726h3v1h-3zM84 725h1v2h-1zM85 725h3v1h-3zM88 724h1v2h-1zM89 724h3v1h-3zM92 723h1v2h-1zM93 723h3v1h-3zM96 722h1v2h-1zM97 722h3v1h-3zM100 721h1v2h-1zM101 721h3v1h-3zM104 720h1v2h-1zM105 720h3v1h-3zM108 719h1v2h-1zM109 719h3v1h-3zM112 718h1v2h-1zM113 718h4v1h-4zM117 717h4v1h-4zM121 716h4v1h-4zM125 715h4v1h-4zM129 714h4v1h-4zM133 713h1v2h-1zM134 713h3v1h-3zM137 712h1v2h-1zM138 712h3v1h-3zM141 711h1v2h-1zM142 711h3v1h-3zM145 710h1v2h-1zM146 710h3v1h-3zM149 709h1v2h-1zM150 709h3v1h-3zM153 708h1v2h-1zM154 708h3v1h-3zM157 707h1v2h-1zM158 707h3v1h-3zM161 706h1v2h-1zM162 706h4v1h-4zM166 705h4v1h-4zM170 704h4v1h-4zM174 703h1v2h-1zM175 703h3v1h-3zM178 702h1v2h-1zM179 702h3v1h-3zM182 701h1v2h-1zM183 701h3v1h-3zM186 700h1v2h-1zM187 700h3v1h-3zM190 699h1v2h-1zM191 699h3v1h-3zM194 698h1v2h-1zM195 698h4v1h-4zM199 697h4v1h-4zM203 696h4v1h-4zM207 695h1v2h-1zM208 695h3v1h-3zM211 694h1v2h-1zM212 694h3v1h-3zM215 693h1v2h-1zM216 693h4v1h-4zM220 692h4v1h-4zM224 691h4v1h-4zM228 690h1v2h-1zM229 690h3v1h-3zM232 689h1v2h-1zM233 689h3v1h-3zM236 688h1v2h-1zM237 688h4v1h-4zM241 687h1v2h-1zM242 687h3v1h-3zM245 686h1v2h-1zM246 686h3v1h-3zM249 685h1v2h-1zM250 685h3v1h-3zM253 684h1v2h-1zM254 684h4v1h-4zM258 683h4v1h-4zM262 682h1v2h-1zM263 682h3v1h-3zM266 681h1v2h-1zM267 681h4v1h-4zM271 680h4v1h-4zM275 679h1v2h-1zM276 679h3v1h-3zM279 678h1v2h-1zM280 678h4v1h-4zM284 677h4v1h-4zM288 676h1v2h-1zM289 676h3v1h-3zM292 675h1v2h-1zM293 675h4v1h-4zM297 674h1v2h-1zM298 674h3v1h-3zM301 673h1v2h-1zM302 673h4v1h-4zM306 672h4v1h-4zM310 671h1v2h-1zM311 671h3v1h-3zM314 670h1v2h-1zM315 670h4v1h-4zM319 669h1v2h-1zM320 669h3v1h-3zM323 668h1v2h-1zM324 668h4v1h-4zM328 667h1v2h-1zM329 667h3v1h-3zM332 666h1v2h-1zM333 666h4v1h-4zM337 665h1v2h-1zM338 665h3v1h-3zM341 664h1v2h-1zM342 664h4v1h-4zM346 663h1v2h-1zM347 663h3v1h-3zM350 662h1v2h-1zM351 662h4v1h-4zM355 661h1v2h-1zM356 661h4v1h-4zM360 660h4v1h-4zM364 659h1v2h-1zM365 659h4v1h-4zM369 658h1v2h-1zM370 658h3v1h-3zM373 657h1v2h-1zM374 657h4v1h-4zM378 656h1v2h-1zM379 656h4v1h-4zM383 655h4v1h-4zM387 654h1v2h-1zM388 654h4v1h-4zM392 653h1v2h-1zM393 653h4v1h-4zM397 652h1v2h-1zM398 652h4v1h-4zM402 651h4v1h-4zM406 650h1v2h-1zM407 650h4v1h-4zM411 649h1v2h-1zM412 649h4v1h-4zM416 648h1v2h-1zM417 648h4v1h-4zM421 647h1v2h-1zM422 647h4v1h-4zM426 646h4v1h-4zM430 645h1v2h-1zM431 645h4v1h-4zM435 644h1v2h-1zM436 644h4v1h-4zM440 643h1v2h-1zM441 643h4v1h-4zM445 642h1v2h-1zM446 642h4v1h-4zM450 641h1v2h-1zM451 641h4v1h-4zM455 640h1v2h-1zM456 640h4v1h-4zM460 639h1v2h-1zM461 639h4v1h-4zM465 638h1v2h-1zM466 638h4v1h-4zM470 637h1v2h-1zM471 637h4v1h-4zM475 636h1v2h-1zM476 636h5v1h-5zM481 635h5v1h-5zM486 634h5v1h-5zM491 633h5v1h-5zM496 632h1v2h-1zM497 632h4v1h-4zM501 631h1v2h-1zM502 631h4v1h-4zM506 630h1v2h-1zM507 630h5v1h-5zM512 629h5v1h-5zM517 628h1v2h-1zM518 628h4v1h-4zM522 627h1v2h-1zM523 627h5v1h-5zM528 626h1v2h-1zM529 626h4v1h-4zM533 625h1v2h-1zM534 625h5v1h-5zM539 624h5v1h-5zM544 623h1v2h-1zM545 623h5v1h-5zM550 622h5v1h-5zM555 621h1v2h-1zM556 621h5v1h-5zM561 620h1v2h-1zM562 620h4v1h-4zM566 619h1v2h-1zM567 619h5v1h-5zM572 618h1v2h-1zM573 618h5v1h-5zM578 617h5v1h-5zM583 616h1v2h-1zM584 616h5v1h-5zM589 615h1v2h-1zM590 615h5v1h-5zM595 614h1v2h-1zM596 614h5v1h-5zM601 613h1v2h-1zM602 613h5v1h-5zM607 612h1v2h-1zM608 612h5v1h-5zM613 611h1v2h-1zM614 611h5v1h-5zM619 610h1v2h-1zM620 610h5v1h-5zM625 609h1v2h-1zM626 609h5v1h-5zM631 608h1v2h-1zM632 608h5v1h-5zM637 607h1v2h-1zM638 607h5v1h-5zM643 606h1v2h-1zM644 606h6v1h-6zM650 605h1v2h-1zM651 605h5v1h-5zM656 604h1v2h-1zM657 604h6v1h-6zM663 603h6v1h-6zM669 602h1v2h-1zM670 602h6v1h-6zM676 601h6v1h-6zM682 600h1v2h-1zM683 600h6v1h-6zM689 599h6v1h-6zM695 598h1v2h-1zM696 598h6v1h-6zM702 597h1v2h-1zM703 597h6v1h-6zM709 596h1v2h-1zM710 596h6v1h-6zM716 595h1v2h-1zM717 595h6v1h-6zM723 594h1v2h-1zM724 594h6v1h-6zM730 593h1v2h-1zM731 593h6v1h-6zM737 592h1v2h-1zM738 592h7v1h-7zM745 591h7v1h-7zM752 590h1v2h-1zM753 590h6v1h-6zM759 589h1v2h-1zM760 589h7v1h-7zM767 588h1v2h-1zM768 588h7v1h-7zM775 587h7v1h-7zM782 586h1v2h-1zM783 586h7v1h-7zM790 585h1v2h-1zM791 585h7v1h-7zM798 584h1v2h-1zM799 584h7v1h-7zM806 583h1v2h-1zM807 583h7v1h-7zM814 582h1v2h-1zM815 582h8v1h-8zM823 581h1v2h-1zM824 581h7v1h-7zM831 580h1v2h-1zM832 580h8v1h-8zM840 579h1v2h-1zM841 579h8v1h-8zM849 578h1v2h-1zM850 578h8v1h-8zM858 577h9v1h-9zM867 576h1v2h-1zM868 576h8v1h-8zM876 575h1v2h-1zM877 575h9v1h-9zM886 574h9v1h-9zM895 573h1v2h-1zM896 573h9v1h-9zM905 572h1v2h-1zM906 572h9v1h-9zM915 571h1v2h-1zM916 571h9v1h-9zM925 570h1v2h-1zM926 570h10v1h-10zM936 569h1v2h-1zM937 569h10v1h-10zM947 568h1v2h-1zM948 568h10v1h-10zM958 567h1v2h-1zM959 567h11v1h-11zM970 566h1v2h-1zM971 566h11v1h-11zM982 565h12v1h-12zM994 564h1v2h-1zM995 564h12v1h-12zM1007 563h13v1h-13zM1020 562h1v2h-1zM1021 562h12v1h-12zM1033 561h1v2h-1zM1034 561h14v1h-14zM1048 560h1v2h-1zM1049 560h14v1h-14zM1063 559h15v1h-15zM1078 558h1v2h-1zM1079 558h16v1h-16zM1095 557h1v2h-1zM1096 557h17v1h-17zM1113 556h19v1h-19zM1132 555h20v1h-20zM1152 554h1v2h-1zM1153 554h22v1h-22zM1175 553h25v1h-25zM1200 552h1v2h-1zM1201 552h29v1h-29zM1230 551h36v1h-36zM1266 550h1v2h-1zM1267 550h53v1h-53zM1320 549h144v1h-144zM1464 549h1v2h-1zM1465 550h54v1h-54zM1519 551h37v1h-37zM1556 551h1v2h-1zM1557 552h30v1h-30zM1587 553h26v1h-26zM1613 554h23v1h-23zM1636 554h1v2h-1zM1637 555h20v1h-20zM1657 555h1v2h-1zM1658 556h19v1h-19zM1677 556h1v2h-1zM1678 557h18v1h-18zM1696 557h1v2h-1zM1697 558h16v1h-16zM1713 558h1v2h-1zM1714 559h15v1h-15zM1729 559h1v2h-1zM1730 560h15v1h-15zM1745 560h1v2h-1zM1746 561h5v1h-5z" fill="#ee8c2a" shape-rendering="crispEdges"/>
<path d="M42 964h1v1h-1zM43 964h2v2h-2zM45 964h2v1h-2zM47 965h3v1h-3zM50 964h1v2h-1zM51 965h2v1h-2zM53 964h1v2h-1zM54 964h2v1h-2zM56 965h21v1h-21zM77 966h1v1h-1zM78 965h1v2h-1zM79 965h3v1h-3zM82 965h1v2h-1zM83 966h3v1h-3zM86 965h1v2h-1zM87 965h49v1h-49zM136 964h1v2h-1zM137 965h4v1h-4zM141 964h1v2h-1zM142 964h50v1h-50zM192 963h2v2h-2zM194 964h1v1h-1zM195 963h2v2h-2zM197 964h5v1h-5zM202 963h1v2h-1zM203 963h1v1h-1zM204 962h1v2h-1zM205 962h1v1h-1zM206 961h1v2h-1zM207 961h1v1h-1zM208 960h1v2h-1zM209 960h2v1h-2zM211 959h1v2h-1zM212 959h1v1h-1zM213 958h1v2h-1zM214 958h2v1h-2zM216 957h2v1h-2zM218 956h2v1h-2zM220 955h1v2h-1zM221 955h2v1h-2zM223 954h1v2h-1zM224 954h1v1h-1zM225 954h2v2h-2zM227 953h1v2h-1zM228 953h1v1h-1zM229 954h1v1h-1zM230 953h1v2h-1zM231 953h2v1h-2zM233 952h5v1h-5zM238 951h1v2h-1zM239 951h2v1h-2zM241 950h1v2h-1zM242 950h2v1h-2zM244 949h1v2h-1zM245 949h2v1h-2zM247 948h1v1h-1zM248 947h1v2h-1zM249 947h1v1h-1zM250 946h1v2h-1zM251 946h3v1h-3zM254 945h1v2h-1zM255 945h1v1h-1zM256 944h1v2h-1zM257 944h1v1h-1zM258 943h1v2h-1zM259 943h3v1h-3zM262 942h1v2h-1zM263 942h1v1h-1zM264 941h1v2h-1zM265 941h2v1h-2zM267 940h1v1h-1zM268 939h1v2h-1zM269 939h2v1h-2zM271 938h1v2h-1zM272 938h2v1h-2zM274 937h1v2h-1zM275 937h3v1h-3zM278 936h2v1h-2zM280 935h6v1h-6zM286 934h1v2h-1zM287 934h1v1h-1zM288 933h1v2h-1zM289 933h3v1h-3zM292 932h1v2h-1zM293 932h3v1h-3zM296 931h1v2h-1zM297 931h5v1h-5zM302 930h2v1h-2zM304 929h5v1h-5zM309 928h1v2h-1zM310 928h1v1h-1zM311 927h1v2h-1zM312 927h3v1h-3zM315 926h1v2h-1zM316 926h5v1h-5zM321 925h1v2h-1zM322 925h3v1h-3zM325 924h4v1h-4zM329 923h1v2h-1zM330 923h1v1h-1zM331 922h1v2h-1zM332 922h4v1h-4zM336 921h1v1h-1zM337 920h1v2h-1zM338 920h1v1h-1zM339 919h1v2h-1zM340 919h5v1h-5zM345 918h1v2h-1zM346 917h1v2h-1zM347 917h5v1h-5zM352 916h3v1h-3zM355 915h1v2h-1zM356 915h1v1h-1zM357 914h1v2h-1zM358 914h1v1h-1zM359 913h1v2h-1zM360 913h4v1h-4zM364 912h1v2h-1zM365 912h1v1h-1zM366 911h1v2h-1zM367 911h3v1h-3zM370 910h3v1h-3zM373 909h1v2h-1zM374 909h1v1h-1zM375 908h1v2h-1zM376 908h2v1h-2zM378 907h5v1h-5zM383 906h1v2h-1zM384 906h1v1h-1zM385 905h1v2h-1zM386 905h4v1h-4zM390 904h2v1h-2zM392 903h1v2h-1zM393 903h3v1h-3zM396 902h1v2h-1zM397 902h1v1h-1zM398 901h1v2h-1zM399 901h2v1h-2zM401 900h1v2h-1zM402 900h2v1h-2zM404 899h4v1h-4zM408 898h1v2h-1zM409 898h3v1h-3zM412 897h3v1h-3zM415 896h1v2h-1zM416 896h1v1h-1zM417 895h1v2h-1zM418 895h3v1h-3zM421 894h1v2h-1zM422 894h3v1h-3zM425 893h1v2h-1zM426 893h1v1h-1zM427 892h1v2h-1zM428 892h3v1h-3zM431 891h1v2h-1zM432 891h1v1h-1zM433 890h1v2h-1zM434 890h6v1h-6zM440 889h1v2h-1zM441 889h4v1h-4zM445 888h1v2h-1zM446 888h7v1h-7zM453 887h3v1h-3zM456 886h1v2h-1zM457 886h6v1h-6zM463 885h1v2h-1zM464 885h4v1h-4zM468 884h1v2h-1zM469 884h1v1h-1zM470 883h1v2h-1zM471 883h1v1h-1zM472 883h1v2h-1zM473 884h1v1h-1zM474 883h1v2h-1zM475 883h4v1h-4zM479 882h6v1h-6zM485 881h1v2h-1zM486 881h1v1h-1zM487 880h1v2h-1zM488 880h3v1h-3zM491 879h1v2h-1zM492 880h3v1h-3zM495 879h1v2h-1zM496 879h2v1h-2zM498 878h5v1h-5zM503 877h1v2h-1zM504 877h5v1h-5zM509 876h1v2h-1zM510 876h1v1h-1zM511 877h1v1h-1zM512 876h5v1h-5zM517 875h2v1h-2zM519 874h1v2h-1zM520 874h2v1h-2zM522 873h1v2h-1zM523 873h1v1h-1zM524 873h1v2h-1zM525 874h2v1h-2zM527 873h1v2h-1zM528 873h3v1h-3zM531 872h1v2h-1zM532 872h5v1h-5zM537 871h1v2h-1zM538 871h2v1h-2zM540 870h1v2h-1zM541 871h3v1h-3zM544 870h1v2h-1zM545 870h2v1h-2zM547 869h5v1h-5zM552 868h1v2h-1zM553 868h3v1h-3zM556 867h1v2h-1zM557 867h1v1h-1zM558 866h1v2h-1zM559 866h5v1h-5zM564 865h1v2h-1zM565 865h4v1h-4zM569 864h1v2h-1zM570 864h4v1h-4zM574 863h1v2h-1zM575 863h4v1h-4zM579 862h2v1h-2zM581 861h1v2h-1zM582 861h6v1h-6zM588 860h1v2h-1zM589 860h1v1h-1zM590 859h1v2h-1zM591 860h3v1h-3zM594 859h1v2h-1zM595 858h1v2h-1zM596 858h4v1h-4zM600 858h1v2h-1zM601 858h1v1h-1zM602 857h1v2h-1zM603 857h4v1h-4zM607 856h1v2h-1zM608 856h5v1h-5zM613 855h4v1h-4zM617 854h3v1h-3zM620 854h1v2h-1zM621 855h1v1h-1zM622 854h1v2h-1zM623 853h1v2h-1zM624 853h1v1h-1zM625 852h2v2h-2zM627 853h2v1h-2zM629 852h1v2h-1zM630 852h3v1h-3zM633 851h1v2h-1zM634 851h1v1h-1zM635 850h2v2h-2zM637 851h2v1h-2zM639 850h7v1h-7zM646 849h1v2h-1zM647 848h1v2h-1zM648 848h1v1h-1zM649 848h2v2h-2zM651 848h3v1h-3zM654 847h1v2h-1zM655 847h1v1h-1zM656 847h1v2h-1zM657 848h1v1h-1zM658 847h1v2h-1zM659 847h1v1h-1zM660 846h1v2h-1zM661 846h2v1h-2zM663 845h6v1h-6zM669 844h4v1h-4zM673 843h1v2h-1zM674 843h5v1h-5zM679 842h1v2h-1zM680 842h2v1h-2zM682 841h1v2h-1zM683 841h6v1h-6zM689 840h1v2h-1zM690 840h4v1h-4zM694 839h1v2h-1zM695 839h4v1h-4zM699 838h4v1h-4zM703 837h1v2h-1zM704 837h3v1h-3zM707 836h2v2h-2zM709 837h2v1h-2zM711 836h5v1h-5zM716 835h1v2h-1zM717 835h1v1h-1zM718 834h4v1h-4zM722 833h1v2h-1zM723 833h6v1h-6zM729 832h1v2h-1zM730 832h3v1h-3zM733 831h7v1h-7zM740 830h1v2h-1zM741 830h4v1h-4zM745 829h1v2h-1zM746 829h9v1h-9zM755 828h1v2h-1zM756 828h7v1h-7zM763 827h1v2h-1zM764 827h4v1h-4zM768 826h1v2h-1zM769 826h1v1h-1zM770 825h1v2h-1zM771 825h8v1h-8zM779 824h1v2h-1zM780 824h1v1h-1zM781 823h3v2h-3zM784 823h2v1h-2zM786 822h1v2h-1zM787 822h4v1h-4zM791 822h1v2h-1zM792 822h1v1h-1zM793 821h1v2h-1zM794 820h1v2h-1zM795 820h1v1h-1zM796 820h1v2h-1zM797 821h5v1h-5zM802 820h3v1h-3zM805 819h6v1h-6zM811 818h3v1h-3zM814 818h1v2h-1zM815 819h1v1h-1zM816 818h1v2h-1zM817 818h1v1h-1zM818 817h1v2h-1zM819 817h1v1h-1zM820 816h1v2h-1zM821 816h6v1h-6zM827 815h1v2h-1zM828 815h5v1h-5zM833 814h4v1h-4zM837 813h1v2h-1zM838 813h6v1h-6zM844 812h1v2h-1zM845 812h2v1h-2zM847 811h7v1h-7zM854 810h1v2h-1zM855 810h1v1h-1zM856 809h1v2h-1zM857 809h5v1h-5zM862 808h3v1h-3zM865 807h1v2h-1zM866 807h2v1h-2zM868 806h1v2h-1zM869 806h4v1h-4zM873 805h1v2h-1zM874 805h3v1h-3zM877 804h4v1h-4zM881 803h1v2h-1zM882 803h7v1h-7zM889 802h1v2h-1zM890 802h3v1h-3zM893 801h2v1h-2zM895 800h8v1h-8zM903 799h1v2h-1zM904 799h1v1h-1zM905 798h1v2h-1zM906 798h5v1h-5zM911 797h1v2h-1zM912 797h1v1h-1zM913 796h4v1h-4zM917 796h1v2h-1zM918 797h1v1h-1zM919 796h1v2h-1zM920 796h2v1h-2zM922 796h1v2h-1zM923 797h1v1h-1zM924 797h1v2h-1zM925 797h7v1h-7zM932 796h1v2h-1zM933 795h1v2h-1zM934 795h5v1h-5zM939 795h1v2h-1zM940 796h2v1h-2zM942 791h1v6h-1zM943 783h1v22h-1zM944 805h1v18h-1zM945 823h1v12h-1zM946 835h1v6h-1zM947 841h1v3h-1zM948 842h1v2h-1zM949 841h1v2h-1zM950 841h1v1h-1zM951 841h1v2h-1zM952 842h1v2h-1zM953 843h1v7h-1zM954 849h1v2h-1zM955 851h1v2h-1zM956 852h1v2h-1zM957 854h1v2h-1zM958 855h1v2h-1zM959 857h1v1h-1zM960 858h1v2h-1zM961 859h1v5h-1zM962 864h1v5h-1zM963 868h1v5h-1zM964 873h1v3h-1zM965 875h1v4h-1zM966 878h1v4h-1zM967 881h1v4h-1zM968 884h1v3h-1zM969 887h1v3h-1zM970 889h1v3h-1zM971 891h1v3h-1zM972 894h1v3h-1zM973 896h1v5h-1zM974 900h1v5h-1zM975 904h1v4h-1zM976 908h1v4h-1zM977 912h1v4h-1zM978 915h1v14h-1zM979 928h1v3h-1zM980 930h1v3h-1zM981 932h1v3h-1zM982 934h1v3h-1zM983 937h1v2h-1zM984 939h1v2h-1zM985 941h1v2h-1zM986 942h1v2h-1zM987 943h1v2h-1zM988 944h1v2h-1zM989 945h1v2h-1zM990 946h1v2h-1zM991 947h1v2h-1zM992 948h1v2h-1zM993 949h1v2h-1zM994 950h1v1h-1zM995 950h1v2h-1zM996 951h1v1h-1zM997 951h1v2h-1zM998 952h1v1h-1zM999 953h2v1h-2zM1001 953h1v2h-1zM1002 954h4v1h-4zM1006 954h1v2h-1zM1007 955h4v1h-4zM1011 955h1v2h-1zM1012 956h5v1h-5zM1017 957h6v1h-6zM1023 957h1v2h-1zM1024 958h8v1h-8zM1032 958h1v2h-1zM1033 959h8v1h-8zM1041 959h1v2h-1zM1042 960h8v1h-8zM1050 961h21v1h-21zM1071 961h1v2h-1zM1072 962h21v1h-21zM1093 962h1v2h-1zM1094 963h96v1h-96zM1190 962h181v1h-181zM1371 960h1v3h-1zM1372 960h69v1h-69zM1441 960h1v2h-1zM1442 961h104v1h-104zM1546 960h1v2h-1zM1547 960h123v1h-123zM1670 959h1v2h-1zM1671 959h81v1h-81z" fill="#8a3cb6" shape-rendering="crispEdges"/>
<circle cx="1762" cy="504" r="2.2" fill="#bdbdbd"/><circle cx="1762" cy="512.3" r="2.2" fill="#bdbdbd"/><circle cx="1762" cy="520.6" r="2.2" fill="#bdbdbd"/>
</svg>
<div class="rp"></div>
<div class="btn" style="left:1778px;top:54px"></div>
<div class="btn" style="left:1850px;top:54px"></div>
<div class="btn" style="left:1778px;top:100px"></div>
<div class="btn" style="left:1850px;top:100px"></div>
<div class="btn" style="left:1778px;top:146px"></div>
<div class="btn" style="left:1850px;top:146px"></div>
<div class="sep" style="left:1773px;top:189px;width:144px"></div>
<div class="btn" style="left:1778px;top:196px"></div>
<div class="btn" style="left:1850px;top:196px"></div>
<div class="sep" style="left:1773px;top:241px;width:144px"></div>

<div class="badge" style="left:3px"><div class="bh" style="background:#4b4520"></div></div>
<div class="badge" style="left:98px;background:linear-gradient(#828282,#8c8c8c)"><div class="bh" style="background:#23807f;border-bottom-color:#747474"></div></div>
<div class="badge" style="left:193px;background:linear-gradient(#828282,#8c8c8c)"><div class="bh" style="background:#8d3848;border-bottom-color:#747474"></div></div>
<div class="badge" style="left:288px"><div class="bh" style="background:#2e3e1c"></div></div>
<div class="badge" style="left:383px"><div class="bh" style="background:#47321c"></div></div>
<div class="badge" style="left:478px"><div class="bh" style="background:#6b2c8c"></div></div>

<div class="sbtn" style="left:1023px"><div class="strip" style="background:#f0a030"></div></div>
<div class="sbtn" style="left:1068px"><div class="strip" style="background:#2232cc"></div></div>
<div class="a" style="left:1118px;top:1000px;width:1px;height:78px;background:#5d554f"></div>
<div class="sbtn" style="left:1129px"><div class="strip" style="background:#b02424"></div></div>
<div class="sbtn" style="left:1174px"><div class="strip" style="background:#c8c8d8"></div></div>
<div class="sbtn" style="left:1219px"><div class="strip" style="background:#c060f0"></div></div>
<div class="a" style="left:1269px;top:1000px;width:1px;height:78px;background:#5d554f"></div>

<div class="box" style="left:1281px;width:198px"><div class="boxh"></div></div>
<div class="box" style="left:1486px;width:158px"><div class="boxh"></div></div>
<div class="box" style="left:1651px;width:148px"><div class="boxh"></div></div>
<div class="a" style="left:1811px;top:1000px;width:1px;height:78px;background:#5d554f"></div>
<div class="a" style="left:1822px;top:999px;width:90px;height:36px;border-radius:6px;background:#ff1f28;border:1px solid #6a5a5a"></div>
<div class="a" style="left:1822px;top:1040px;width:90px;height:38px;border-radius:5px;background:#c9c9c9"></div>

<svg width="1920" height="1080">
<!-- logo -->
<path d="M1815.1 3.9 H1820 V25.8 H1815.1 Z" fill="#fff"/>
<path d="M1815 25.8 L1820.2 25.8 L1831 9.4 L1825.8 9.4 Z" fill="#1cbfe0"/>
<path d="M1822.3 19.8 L1825 15.6 L1830.2 25.8 L1824 25.8 Z" fill="#fff"/>
<path d="M1831.6 9.4 L1835.9 4.3 V9.4 H1838.3 V14 H1835.9 V25.8 H1831.6 Z" fill="#fff"/>
<!-- zoom icon -->
<path d="M1797.3 202.2H1800.2V204.3H1797.3ZM1803.2 202.2H1807.3V204.3H1803.2ZM1810.4 202.2H1814.7V204.3H1810.4ZM1817.9 202.2H1820.8V204.3H1817.9ZM1797.3 220.3H1800.2V222.6H1797.3ZM1803.2 220.3H1807.3V222.6H1803.2ZM1810.4 220.3H1814.7V222.6H1810.4ZM1817.9 220.3H1820.8V222.6H1817.9ZM1797.3 207H1799.8V210.9H1797.3ZM1797.3 213.2H1799.8V216.8H1797.3ZM1818.2 207H1820.7V210.9H1818.2ZM1818.2 213.2H1820.7V216.8H1818.2Z" fill="#c4c4c4"/>
<circle cx="1811" cy="210.7" r="4" fill="none" stroke="#c4c4c4" stroke-width="1.9"/>
<line x1="1808" y1="213.7" x2="1803.2" y2="217" stroke="#c4c4c4" stroke-width="2.6" stroke-linecap="round"/>
<path d="M1815.2 217.2 L1823.3 221.6 L1820.3 222.8 L1822.8 226 L1821.2 227 L1818.8 223.8 L1817.2 226.2 Z" fill="#c4c4c4" stroke="#1a1a1a" stroke-width="0.6"/>
<!-- Bw icons -->
<text x="74.7" y="1069.2" font-size="10" fill="#111" stroke="#111" stroke-width="0.25">B</text><text x="79.6" y="1071.8" font-size="9.5" fill="#111" stroke="#111" stroke-width="0.2">w</text><text x="169.7" y="1069.2" font-size="10" fill="#111" stroke="#111" stroke-width="0.25">B</text><text x="174.6" y="1071.8" font-size="9.5" fill="#111" stroke="#111" stroke-width="0.2">w</text><text x="264.7" y="1069.2" font-size="10" fill="#111" stroke="#111" stroke-width="0.25">B</text><text x="269.6" y="1071.8" font-size="9.5" fill="#111" stroke="#111" stroke-width="0.2">w</text><text x="359.7" y="1069.2" font-size="10" fill="#111" stroke="#111" stroke-width="0.25">B</text><text x="364.6" y="1071.8" font-size="9.5" fill="#111" stroke="#111" stroke-width="0.2">w</text>
<!-- T icon in horizontal -->
<path d="M1392 1064 H1400 V1071.5 H1397.5 L1396 1074.5 L1394.5 1071.5 H1392 Z" fill="#111" stroke="#f0902a" stroke-width="1.5"/>
<text x="1396" y="1070.8" font-size="7.5" font-weight="bold" fill="#fff" text-anchor="middle">T</text>
<!-- trigger badge -->
<rect x="1490.9" y="1025.6" width="28.4" height="14.6" rx="5" fill="#2626c4" stroke="#000" stroke-width="1.3"/>
<text x="1505.2" y="1036.8" font-size="14.5" fill="#fff" text-anchor="middle">6</text>
<path d="M1530.3 1036.8 H1534.5 L1541.6 1027.3 H1546" fill="none" stroke="#35358a" stroke-width="1.1"/>
<text x="19.31" y="19" font-size="15.5" font-weight="normal" fill="#ececec" stroke="#ececec" stroke-width="0.3" textLength="27.16" lengthAdjust="spacingAndGlyphs">File</text>
<text x="85.61" y="19" font-size="15.5" font-weight="normal" fill="#ececec" stroke="#ececec" stroke-width="0.3" textLength="29.08" lengthAdjust="spacingAndGlyphs">Edit</text>
<text x="154.30" y="19" font-size="15.5" font-weight="normal" fill="#ececec" stroke="#ececec" stroke-width="0.3" textLength="45.57" lengthAdjust="spacingAndGlyphs">Utility</text>
<text x="239.37" y="19" font-size="15.5" font-weight="normal" fill="#ececec" stroke="#ececec" stroke-width="0.3" textLength="36.14" lengthAdjust="spacingAndGlyphs">Help</text>
<text x="16.70" y="50" font-size="17" font-weight="normal" fill="#e4e4e4" stroke="#e4e4e4" stroke-width="0" textLength="124.20" lengthAdjust="spacingAndGlyphs">Waveform View</text>
<text x="1802.80" y="44" font-size="15" font-weight="bold" fill="#e6e6e6" stroke="#e6e6e6" stroke-width="0" textLength="85.16" lengthAdjust="spacingAndGlyphs">Add New...</text>
<text x="1783.85" y="77.1" font-size="15.5" font-weight="normal" fill="#f2f2f2" stroke="#f2f2f2" stroke-width="0.3" textLength="51.40" lengthAdjust="spacingAndGlyphs">Cursors</text>
<text x="1855.26" y="77.1" font-size="15.5" font-weight="normal" fill="#f2f2f2" stroke="#f2f2f2" stroke-width="0.3" textLength="50.41" lengthAdjust="spacingAndGlyphs">Callout</text>
<text x="1779.41" y="123" font-size="15.5" font-weight="normal" fill="#f2f2f2" stroke="#f2f2f2" stroke-width="0.3" textLength="59.65" lengthAdjust="spacingAndGlyphs">Measure</text>
<text x="1857.32" y="123" font-size="15.5" font-weight="normal" fill="#f2f2f2" stroke="#f2f2f2" stroke-width="0.3" textLength="47.98" lengthAdjust="spacingAndGlyphs">Search</text>
<text x="1784.62" y="160.8" font-size="15" font-weight="normal" fill="#f2f2f2" stroke="#f2f2f2" stroke-width="0.3" textLength="48.81" lengthAdjust="spacingAndGlyphs">Results</text>
<text x="1792.20" y="176.9" font-size="15" font-weight="normal" fill="#f2f2f2" stroke="#f2f2f2" stroke-width="0.3" textLength="36.27" lengthAdjust="spacingAndGlyphs">Table</text>
<text x="1866.63" y="168.9" font-size="15.5" font-weight="normal" fill="#f2f2f2" stroke="#f2f2f2" stroke-width="0.3" textLength="28.57" lengthAdjust="spacingAndGlyphs">Plot</text>
<text x="1855.52" y="218.9" font-size="15.5" font-weight="normal" fill="#f2f2f2" stroke="#f2f2f2" stroke-width="0.3" textLength="51.90" lengthAdjust="spacingAndGlyphs">More...</text>
<text x="7.99" y="1017" font-size="15.3" font-weight="normal" fill="#f2ec22" stroke="#f2ec22" stroke-width="0.3" textLength="29.29" lengthAdjust="spacingAndGlyphs">Ch 1</text>
<text x="7.95" y="1036.7" font-size="15" font-weight="normal" fill="#111" stroke="#111" stroke-width="0.3" textLength="43.52" lengthAdjust="spacingAndGlyphs">5 V/div</text>
<text x="8.92" y="1055.4" font-size="15" font-weight="normal" fill="#111" stroke="#111" stroke-width="0.3" textLength="35.60" lengthAdjust="spacingAndGlyphs">1 MΩ</text>
<text x="7.94" y="1074.7" font-size="15" font-weight="normal" fill="#111" stroke="#111" stroke-width="0.3" textLength="53.09" lengthAdjust="spacingAndGlyphs">200 kHz</text>
<text x="102.66" y="1017" font-size="15.3" font-weight="normal" fill="#161616" stroke="#161616" stroke-width="0.3" textLength="30.44" lengthAdjust="spacingAndGlyphs">Ch 2</text>
<text x="102.62" y="1036.7" font-size="15" font-weight="normal" fill="#111" stroke="#111" stroke-width="0.3" textLength="73.42" lengthAdjust="spacingAndGlyphs">250 mV/div</text>
<text x="103.72" y="1055.4" font-size="15" font-weight="normal" fill="#111" stroke="#111" stroke-width="0.3" textLength="35.49" lengthAdjust="spacingAndGlyphs">1 MΩ</text>
<text x="102.64" y="1074.7" font-size="15" font-weight="normal" fill="#111" stroke="#111" stroke-width="0.3" textLength="53.09" lengthAdjust="spacingAndGlyphs">200 kHz</text>
<text x="197.56" y="1017" font-size="15.3" font-weight="normal" fill="#c8a4aa" stroke="#c8a4aa" stroke-width="0.3" textLength="30.44" lengthAdjust="spacingAndGlyphs">Ch 3</text>
<text x="198.00" y="1036.7" font-size="15" font-weight="normal" fill="#161616" stroke="#161616" stroke-width="0.3" textLength="72.95" lengthAdjust="spacingAndGlyphs">450 mV/div</text>
<text x="198.72" y="1055.4" font-size="15" font-weight="normal" fill="#161616" stroke="#161616" stroke-width="0.3" textLength="35.49" lengthAdjust="spacingAndGlyphs">1 MΩ</text>
<text x="197.64" y="1074.7" font-size="15" font-weight="normal" fill="#161616" stroke="#161616" stroke-width="0.3" textLength="53.09" lengthAdjust="spacingAndGlyphs">200 kHz</text>
<text x="292.33" y="1017" font-size="15.3" font-weight="normal" fill="#8cd23c" stroke="#8cd23c" stroke-width="0.3" textLength="31.48" lengthAdjust="spacingAndGlyphs">Ch 4</text>
<text x="292.31" y="1036.7" font-size="15" font-weight="normal" fill="#111" stroke="#111" stroke-width="0.3" textLength="73.98" lengthAdjust="spacingAndGlyphs">200 mV/div</text>
<text x="293.72" y="1055.4" font-size="15" font-weight="normal" fill="#111" stroke="#111" stroke-width="0.3" textLength="35.49" lengthAdjust="spacingAndGlyphs">1 MΩ</text>
<text x="292.64" y="1074.7" font-size="15" font-weight="normal" fill="#111" stroke="#111" stroke-width="0.3" textLength="53.09" lengthAdjust="spacingAndGlyphs">200 kHz</text>
<text x="387.44" y="1017" font-size="15.3" font-weight="normal" fill="#f0922a" stroke="#f0922a" stroke-width="0.3" textLength="49.36" lengthAdjust="spacingAndGlyphs">Math 1</text>
<text x="387.53" y="1036.7" font-size="15" font-weight="normal" fill="#111" stroke="#111" stroke-width="0.3" textLength="76.34" lengthAdjust="spacingAndGlyphs">74.6 mT/div</text>
<text x="387.53" y="1055.4" font-size="15" font-weight="normal" fill="#111" stroke="#111" stroke-width="0.3" textLength="75.46" lengthAdjust="spacingAndGlyphs">Intg(Ch2)…</text>
<text x="482.82" y="1017" font-size="15.3" font-weight="normal" fill="#ffffff" stroke="#ffffff" stroke-width="0.3" textLength="50.30" lengthAdjust="spacingAndGlyphs">Math 2</text>
<text x="482.30" y="1036.7" font-size="15" font-weight="normal" fill="#111" stroke="#111" stroke-width="0.3" textLength="82.38" lengthAdjust="spacingAndGlyphs">914.99 A/div</text>
<text x="483.30" y="1055.4" font-size="15" font-weight="normal" fill="#111" stroke="#111" stroke-width="0.3" textLength="75.49" lengthAdjust="spacingAndGlyphs">-Intg(Ch3…</text>
<text x="1037.38" y="1050" font-size="19" font-weight="normal" fill="#ececec" stroke="#ececec" stroke-width="0" textLength="10.81" lengthAdjust="spacingAndGlyphs">5</text>
<text x="1081.47" y="1050" font-size="19" font-weight="normal" fill="#ececec" stroke="#ececec" stroke-width="0" textLength="11.99" lengthAdjust="spacingAndGlyphs">6</text>
<text x="1135.70" y="1032.6" font-size="15.3" font-weight="normal" fill="#ececec" stroke="#ececec" stroke-width="0.3" textLength="26.61" lengthAdjust="spacingAndGlyphs">Add</text>
<text x="1133.75" y="1048.7" font-size="15.3" font-weight="normal" fill="#ececec" stroke="#ececec" stroke-width="0.3" textLength="28.98" lengthAdjust="spacingAndGlyphs">New</text>
<text x="1131.47" y="1065" font-size="15.3" font-weight="normal" fill="#ececec" stroke="#ececec" stroke-width="0.3" textLength="34.87" lengthAdjust="spacingAndGlyphs">Math</text>
<text x="1180.70" y="1032.6" font-size="15.3" font-weight="normal" fill="#ececec" stroke="#ececec" stroke-width="0.3" textLength="26.61" lengthAdjust="spacingAndGlyphs">Add</text>
<text x="1178.75" y="1048.7" font-size="15.3" font-weight="normal" fill="#ececec" stroke="#ececec" stroke-width="0.3" textLength="28.98" lengthAdjust="spacingAndGlyphs">New</text>
<text x="1182.91" y="1065" font-size="15.3" font-weight="normal" fill="#ececec" stroke="#ececec" stroke-width="0.3" textLength="21.22" lengthAdjust="spacingAndGlyphs">Ref</text>
<text x="1225.70" y="1032.6" font-size="15.3" font-weight="normal" fill="#ececec" stroke="#ececec" stroke-width="0.3" textLength="26.61" lengthAdjust="spacingAndGlyphs">Add</text>
<text x="1223.75" y="1048.7" font-size="15.3" font-weight="normal" fill="#ececec" stroke="#ececec" stroke-width="0.3" textLength="28.98" lengthAdjust="spacingAndGlyphs">New</text>
<text x="1227.44" y="1065" font-size="15.3" font-weight="normal" fill="#ececec" stroke="#ececec" stroke-width="0.3" textLength="22.77" lengthAdjust="spacingAndGlyphs">Bus</text>
<text x="1285.41" y="1018.2" font-size="15.2" font-weight="normal" fill="#f0f0f0" stroke="#f0f0f0" stroke-width="0.3" textLength="74.19" lengthAdjust="spacingAndGlyphs">Horizontal</text>
<text x="1285.30" y="1036.6" font-size="15" font-weight="normal" fill="#111" stroke="#111" stroke-width="0.3" textLength="52.57" lengthAdjust="spacingAndGlyphs">4 ms/div</text>
<text x="1391.40" y="1036.6" font-size="15" font-weight="normal" fill="#111" stroke="#111" stroke-width="0.3" textLength="39.33" lengthAdjust="spacingAndGlyphs">40 ms</text>
<text x="1284.40" y="1055.4" font-size="15" font-weight="normal" fill="#111" stroke="#111" stroke-width="0.3" textLength="68.58" lengthAdjust="spacingAndGlyphs">SR: 1 MS/s</text>
<text x="1391.25" y="1055.4" font-size="15" font-weight="normal" fill="#111" stroke="#111" stroke-width="0.3" textLength="43.13" lengthAdjust="spacingAndGlyphs">1 µs/pt</text>
<text x="1284.36" y="1074.2" font-size="15" font-weight="normal" fill="#111" stroke="#111" stroke-width="0.3" textLength="71.67" lengthAdjust="spacingAndGlyphs">RL: 40 kpts</text>
<text x="1404.63" y="1074.2" font-size="15" font-weight="normal" fill="#111" stroke="#111" stroke-width="0.3" textLength="23.21" lengthAdjust="spacingAndGlyphs">3%</text>
<text x="1491.80" y="1018.2" font-size="15.2" font-weight="normal" fill="#f0f0f0" stroke="#f0f0f0" stroke-width="0.3" textLength="48.04" lengthAdjust="spacingAndGlyphs">Trigger</text>
<text x="1555.23" y="1036.6" font-size="15" font-weight="normal" fill="#111" stroke="#111" stroke-width="0.3" textLength="21.90" lengthAdjust="spacingAndGlyphs">3 V</text>
<text x="1656.30" y="1018" font-size="15.2" font-weight="normal" fill="#f0f0f0" stroke="#f0f0f0" stroke-width="0.3" textLength="77.48" lengthAdjust="spacingAndGlyphs">Acquisition</text>
<text x="1654.30" y="1036.5" font-size="15" font-weight="normal" fill="#111" stroke="#111" stroke-width="0.3" textLength="53.48" lengthAdjust="spacingAndGlyphs">Manual,</text>
<text x="1736.30" y="1036.5" font-size="15" font-weight="normal" fill="#111" stroke="#111" stroke-width="0.3" textLength="49.15" lengthAdjust="spacingAndGlyphs">Analyze</text>
<text x="1654.36" y="1055.2" font-size="15" font-weight="normal" fill="#111" stroke="#111" stroke-width="0.3" textLength="107.66" lengthAdjust="spacingAndGlyphs">High Res: 16 bits</text>
<text x="1654.35" y="1073.4" font-size="15" font-weight="normal" fill="#111" stroke="#111" stroke-width="0.3" textLength="71.01" lengthAdjust="spacingAndGlyphs">Single: 0 /1</text>
<text x="1839.34" y="1019.9" font-size="12.5" font-weight="bold" fill="#ffffff" stroke="#ffffff" stroke-width="0" textLength="54.77" lengthAdjust="spacingAndGlyphs">Preview</text>
<text x="1824.50" y="1054" font-size="14" font-weight="normal" fill="#111" stroke="#111" stroke-width="0.3" textLength="84.55" lengthAdjust="spacingAndGlyphs">06 May 2025</text>
<text x="1829.23" y="1071.3" font-size="14" font-weight="normal" fill="#111" stroke="#111" stroke-width="0.3" textLength="75.37" lengthAdjust="spacingAndGlyphs">5:41:11 PM</text>
<text x="1785.80" y="25.8" font-size="29.5" font-weight="bold" fill="#ffffff" stroke="#ffffff" stroke-width="0" textLength="29.86" lengthAdjust="spacingAndGlyphs">Te</text>
<text x="1837.89" y="25.8" font-size="29.5" font-weight="bold" fill="#ffffff" stroke="#ffffff" stroke-width="0" textLength="65.22" lengthAdjust="spacingAndGlyphs">ronix</text>
</svg>
</body></html>
